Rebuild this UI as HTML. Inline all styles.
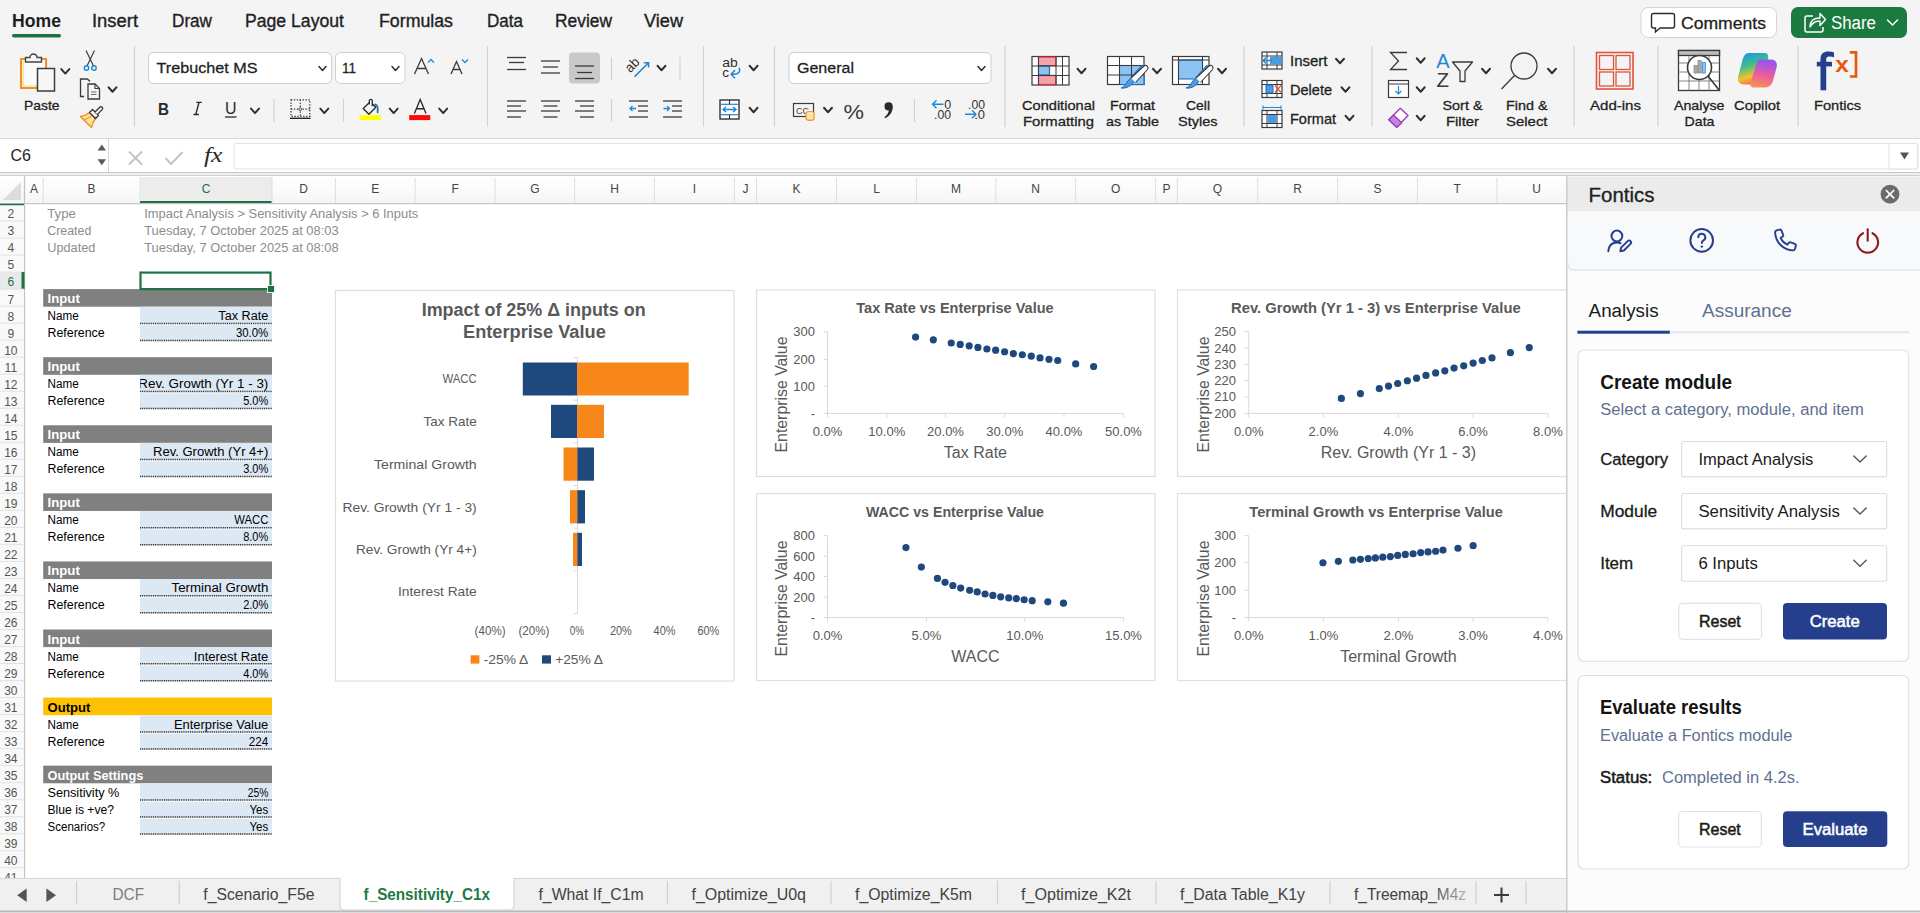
<!DOCTYPE html>
<html><head><meta charset="utf-8"><title>Excel - Fontics</title>
<style>
html,body{margin:0;padding:0;width:1920px;height:913px;overflow:hidden;background:#fff;}
svg{display:block;font-family:"Liberation Sans",sans-serif;}
</style></head><body>
<svg width="1920" height="913" viewBox="0 0 1920 913">
<rect x="0" y="0" width="1920" height="138" fill="#f4f4f4" stroke="none" stroke-width="1" rx="0" />
<line x1="0" y1="138.5" x2="1920" y2="138.5" stroke="#d6d6d6" stroke-width="1" />
<text x="12" y="26.5" font-size="17.5" fill="#1f1f1f" font-weight="bold" textLength="49" lengthAdjust="spacingAndGlyphs" stroke="#1f1f1f" stroke-width="0">Home</text>
<text x="92" y="26.5" font-size="17.5" fill="#1f1f1f" font-weight="normal" textLength="46" lengthAdjust="spacingAndGlyphs" stroke="#1f1f1f" stroke-width="0.35">Insert</text>
<text x="172" y="26.5" font-size="17.5" fill="#1f1f1f" font-weight="normal" textLength="40" lengthAdjust="spacingAndGlyphs" stroke="#1f1f1f" stroke-width="0.35">Draw</text>
<text x="245" y="26.5" font-size="17.5" fill="#1f1f1f" font-weight="normal" textLength="99" lengthAdjust="spacingAndGlyphs" stroke="#1f1f1f" stroke-width="0.35">Page Layout</text>
<text x="379" y="26.5" font-size="17.5" fill="#1f1f1f" font-weight="normal" textLength="74" lengthAdjust="spacingAndGlyphs" stroke="#1f1f1f" stroke-width="0.35">Formulas</text>
<text x="487" y="26.5" font-size="17.5" fill="#1f1f1f" font-weight="normal" textLength="36" lengthAdjust="spacingAndGlyphs" stroke="#1f1f1f" stroke-width="0.35">Data</text>
<text x="555" y="26.5" font-size="17.5" fill="#1f1f1f" font-weight="normal" textLength="57" lengthAdjust="spacingAndGlyphs" stroke="#1f1f1f" stroke-width="0.35">Review</text>
<text x="644" y="26.5" font-size="17.5" fill="#1f1f1f" font-weight="normal" textLength="39" lengthAdjust="spacingAndGlyphs" stroke="#1f1f1f" stroke-width="0.35">View</text>
<rect x="12" y="34" width="49" height="3.5" fill="#1a7340" stroke="none" stroke-width="1" rx="1.75" />
<rect x="1641" y="7.5" width="135.5" height="30" fill="#ffffff" stroke="#d4d4d4" stroke-width="1" rx="7" />
<path d="M1653.5,13.5 h19 a2,2 0 0 1 2,2 v10.5 a2,2 0 0 1 -2,2 h-12.5 l-4.5,4 v-4 h-2 a2,2 0 0 1 -2,-2 v-10.5 a2,2 0 0 1 2,-2 z" fill="none" stroke="#2b2b2b" stroke-width="1.4" />
<text x="1681" y="28.5" font-size="17" fill="#1f1f1f" stroke="#1f1f1f" stroke-width="0.3" textLength="85" lengthAdjust="spacingAndGlyphs">Comments</text>
<rect x="1791" y="7" width="116" height="31" fill="#1b7a40" stroke="none" stroke-width="1" rx="7" />
<path d="M1813,16 h-6 a2,2 0 0 0 -2,2 v12 a2,2 0 0 0 2,2 h14 a2,2 0 0 0 2,-2 v-3" fill="none" stroke="#fff" stroke-width="1.5" />
<path d="M1810,27 c0,-6 4,-9 10,-9 v-4.5 l5.5,6 l-5.5,6 v-4.5 c-4,0 -7.5,1.5 -10,6 z" fill="none" stroke="#fff" stroke-width="1.4" stroke-linejoin="round"/>
<text x="1831" y="29" font-size="18" fill="#ffffff" textLength="45" lengthAdjust="spacingAndGlyphs">Share</text>
<path d="M1887.5,20.0 L1892.5,25.0 L1897.5,20.0" fill="none" stroke="#fff" stroke-width="1.5" stroke-linecap="round" stroke-linejoin="round"/>
<line x1="134.5" y1="46" x2="134.5" y2="127" stroke="#d2d2d2" stroke-width="1.2" />
<line x1="487.5" y1="46" x2="487.5" y2="127" stroke="#d2d2d2" stroke-width="1.2" />
<line x1="703.5" y1="46" x2="703.5" y2="127" stroke="#d2d2d2" stroke-width="1.2" />
<line x1="774.5" y1="46" x2="774.5" y2="127" stroke="#d2d2d2" stroke-width="1.2" />
<line x1="1005" y1="46" x2="1005" y2="127" stroke="#d2d2d2" stroke-width="1.2" />
<line x1="1244" y1="46" x2="1244" y2="127" stroke="#d2d2d2" stroke-width="1.2" />
<line x1="1372" y1="46" x2="1372" y2="127" stroke="#d2d2d2" stroke-width="1.2" />
<line x1="1574" y1="46" x2="1574" y2="127" stroke="#d2d2d2" stroke-width="1.2" />
<line x1="1658" y1="46" x2="1658" y2="127" stroke="#d2d2d2" stroke-width="1.2" />
<line x1="1798" y1="46" x2="1798" y2="127" stroke="#d2d2d2" stroke-width="1.2" />
<line x1="274" y1="99" x2="274" y2="122" stroke="#d2d2d2" stroke-width="1.2" />
<line x1="343.5" y1="99" x2="343.5" y2="122" stroke="#d2d2d2" stroke-width="1.2" />
<line x1="611.5" y1="57" x2="611.5" y2="80" stroke="#d2d2d2" stroke-width="1.2" />
<line x1="680" y1="57" x2="680" y2="80" stroke="#d2d2d2" stroke-width="1.2" />
<line x1="611.5" y1="99" x2="611.5" y2="122" stroke="#d2d2d2" stroke-width="1.2" />
<line x1="914.5" y1="99" x2="914.5" y2="122" stroke="#d2d2d2" stroke-width="1.2" />
<path d="M21,59 h4 M42,59 h4 v9" fill="none" stroke="#f0902a" stroke-width="2.2" />
<rect x="21" y="59" width="25" height="29" fill="#fbfbfb" stroke="#f0902a" stroke-width="2" rx="0" />
<path d="M23.3,61 V86 H37" fill="none" stroke="#fde3a0" stroke-width="1.6" />
<rect x="37.5" y="68.5" width="17" height="22.5" fill="#f7f7f7" stroke="#3c3c3c" stroke-width="1.5" rx="0" />
<path d="M25.5,62 v-4.5 h4.5 a3.5,3.5 0 0 1 7,0 h4.5 v4.5 z" fill="#f4f4f4" stroke="#444" stroke-width="1.4" />
<path d="M61.3,69.05 L65.3,73.55 L69.3,69.05" fill="none" stroke="#2e2e2e" stroke-width="1.9" stroke-linecap="round" stroke-linejoin="round"/>
<text x="24" y="109.7" font-size="13" fill="#1f1f1f" stroke="#1f1f1f" stroke-width="0.3" textLength="35.5" lengthAdjust="spacingAndGlyphs">Paste</text>
<path d="M86,50.5 L93.5,66 M94.5,50.5 L87,66" fill="none" stroke="#333" stroke-width="1.1" />
<circle cx="86.5" cy="68" r="2.2" fill="none" stroke="#1e88d6" stroke-width="1.4"/>
<circle cx="94" cy="68" r="2.2" fill="none" stroke="#1e88d6" stroke-width="1.4"/>
<path d="M84,96.5 h-3.5 v-17.5 h7 l2.5,2.5" fill="none" stroke="#3a3a3a" stroke-width="1.3" />
<path d="M88,84 h7 l4.5,4.5 v10.5 h-11.5 z" fill="#f7f7f7" stroke="#3a3a3a" stroke-width="1.3" />
<path d="M95,84 v4.5 h4.5" fill="none" stroke="#3a3a3a" stroke-width="1.1" />
<line x1="91" y1="92" x2="96.5" y2="92" stroke="#555" stroke-width="0.9" />
<line x1="91" y1="94.5" x2="96.5" y2="94.5" stroke="#555" stroke-width="0.9" />
<path d="M108.5,87.25 L112.5,91.75 L116.5,87.25" fill="none" stroke="#2e2e2e" stroke-width="1.9" stroke-linecap="round" stroke-linejoin="round"/>
<path d="M80.5,116.5 C84,116 87,114.5 89.5,112.5 L95.5,118.5 C93.5,121 92,124 91.5,127.5 z" fill="#fde3a0" stroke="#f0902a" stroke-width="1.5" stroke-linejoin="round"/>
<path d="M84,120 L91,116.5" fill="none" stroke="#f0902a" stroke-width="1.1" />
<path d="M89.5,112.5 L92.5,109.5 L98.5,115.5 L95.5,118.5 z" fill="#f4f4f4" stroke="#333" stroke-width="1.3" stroke-linejoin="round"/>
<path d="M95,112 L99.8,107.2 A1.7,1.7 0 0 1 102.2,109.6 L97.4,114.4" fill="#f4f4f4" stroke="#333" stroke-width="1.3" />
<rect x="148.5" y="52.5" width="183" height="31" fill="#ffffff" stroke="#cfcfcf" stroke-width="1" rx="5" />
<text x="156.5" y="73.2" font-size="15.5" fill="#1f1f1f" stroke="#1f1f1f" stroke-width="0.3" textLength="101" lengthAdjust="spacingAndGlyphs">Trebuchet MS</text>
<path d="M319.0,66.5 L322.5,70.5 L326.0,66.5" fill="none" stroke="#2e2e2e" stroke-width="1.5" stroke-linecap="round" stroke-linejoin="round"/>
<rect x="335.5" y="52.5" width="69.5" height="31" fill="#ffffff" stroke="#cfcfcf" stroke-width="1" rx="5" />
<text x="342" y="73.2" font-size="15.5" fill="#1f1f1f" stroke="#1f1f1f" stroke-width="0.3" textLength="14" lengthAdjust="spacingAndGlyphs">11</text>
<path d="M392.0,66.5 L395.5,70.5 L399.0,66.5" fill="none" stroke="#2e2e2e" stroke-width="1.5" stroke-linecap="round" stroke-linejoin="round"/>
<path d="M414.5,74 L421.5,58.5 L428.5,74 M417,68.5 h9" fill="none" stroke="#3a3a3a" stroke-width="1.3" />
<path d="M428,62.5 l3,-3 l3,3" fill="none" stroke="#1e88d6" stroke-width="1.3" />
<path d="M451,74 L456.5,61.5 L462,74 M453,69.5 h7" fill="none" stroke="#3a3a3a" stroke-width="1.3" />
<path d="M462,59.5 l3,3 l3,-3" fill="none" stroke="#1e88d6" stroke-width="1.3" />
<text x="158" y="114.5" font-size="17" fill="#2a2a2a" font-weight="bold" textLength="11" lengthAdjust="spacingAndGlyphs">B</text>
<path d="M196.3,102.3 H201.8 M199.05,102.3 L195.75,114.5 M193.4,114.5 H198.9" fill="none" stroke="#2a2a2a" stroke-width="1.35" />
<text x="225" y="114" font-size="16" fill="#2a2a2a" textLength="11.5" lengthAdjust="spacingAndGlyphs">U</text>
<line x1="225" y1="117" x2="236.5" y2="117" stroke="#2a2a2a" stroke-width="1.3" />
<path d="M251.0,108.55 L255,113.05 L259.0,108.55" fill="none" stroke="#2e2e2e" stroke-width="1.9" stroke-linecap="round" stroke-linejoin="round"/>
<rect x="291" y="99.8" width="18.8" height="16.5" fill="none" stroke="#333" stroke-width="1.3" stroke-dasharray="1.3,1.6"/>
<path d="M300.3,99.8 v16.5 M291,109.2 h18.8" fill="none" stroke="#333" stroke-width="1.2" stroke-dasharray="1.3,1.6"/>
<circle cx="300.3" cy="109.2" r="1.4" fill="#f4f4f4" stroke="#333" stroke-width="0.9"/>
<line x1="290" y1="118.3" x2="310.5" y2="118.3" stroke="#222" stroke-width="1.4" />
<path d="M320.3,108.55 L324.3,113.05 L328.3,108.55" fill="none" stroke="#2e2e2e" stroke-width="1.9" stroke-linecap="round" stroke-linejoin="round"/>
<path d="M369.2,102.8 L363.2,108.6 L368.9,114.2 L375.8,107.2 L372.4,103.9" fill="none" stroke="#2a2a2a" stroke-width="1.35" stroke-linejoin="round"/>
<path d="M369.3,104.5 V100.9 A1.5,1.5 0 0 1 372.3,100.9 V106.2" fill="none" stroke="#2a2a2a" stroke-width="1.3" />
<path d="M375.2,104.4 C377.2,104.9 378.2,107.5 377.6,112.4" fill="none" stroke="#1e6fc0" stroke-width="1.8" stroke-linecap="round"/>
<rect x="359.6" y="115.1" width="21.2" height="5" fill="#ffff00" stroke="none" stroke-width="1" rx="0" />
<path d="M389.7,108.55 L393.7,113.05 L397.7,108.55" fill="none" stroke="#2e2e2e" stroke-width="1.9" stroke-linecap="round" stroke-linejoin="round"/>
<path d="M414.4,113.6 L420.2,99.6 L426,113.6 M416.5,108.7 h7.5" fill="none" stroke="#2a2a2a" stroke-width="1.35" />
<rect x="409.2" y="115.1" width="21" height="5" fill="#ff0a0a" stroke="none" stroke-width="1" rx="0" />
<path d="M439.2,108.55 L443.2,113.05 L447.2,108.55" fill="none" stroke="#2e2e2e" stroke-width="1.9" stroke-linecap="round" stroke-linejoin="round"/>
<rect x="569" y="52.5" width="31" height="31" fill="#c9c9c9" stroke="none" stroke-width="1" rx="4" />
<line x1="507" y1="57.5" x2="526" y2="57.5" stroke="#3a3a3a" stroke-width="1.3" />
<line x1="509" y1="62.5" x2="524" y2="62.5" stroke="#3a3a3a" stroke-width="1.3" />
<line x1="507" y1="69.5" x2="526" y2="69.5" stroke="#3a3a3a" stroke-width="1.3" />
<line x1="541" y1="61" x2="560" y2="61" stroke="#3a3a3a" stroke-width="1.3" />
<line x1="543" y1="67" x2="558" y2="67" stroke="#3a3a3a" stroke-width="1.3" />
<line x1="541" y1="73" x2="560" y2="73" stroke="#3a3a3a" stroke-width="1.3" />
<line x1="575" y1="66" x2="594" y2="66" stroke="#3a3a3a" stroke-width="1.3" />
<line x1="577" y1="72.5" x2="592" y2="72.5" stroke="#3a3a3a" stroke-width="1.3" />
<line x1="575" y1="78.5" x2="594" y2="78.5" stroke="#3a3a3a" stroke-width="1.3" />
<line x1="507" y1="101" x2="526" y2="101" stroke="#3a3a3a" stroke-width="1.3" />
<line x1="507" y1="106" x2="521" y2="106" stroke="#3a3a3a" stroke-width="1.3" />
<line x1="507" y1="111" x2="526" y2="111" stroke="#3a3a3a" stroke-width="1.3" />
<line x1="507" y1="117" x2="521" y2="117" stroke="#3a3a3a" stroke-width="1.3" />
<line x1="541.0" y1="101" x2="560.0" y2="101" stroke="#3a3a3a" stroke-width="1.3" />
<line x1="543.5" y1="106" x2="557.5" y2="106" stroke="#3a3a3a" stroke-width="1.3" />
<line x1="541.0" y1="111" x2="560.0" y2="111" stroke="#3a3a3a" stroke-width="1.3" />
<line x1="543.5" y1="117" x2="557.5" y2="117" stroke="#3a3a3a" stroke-width="1.3" />
<line x1="575" y1="101" x2="594" y2="101" stroke="#3a3a3a" stroke-width="1.3" />
<line x1="580" y1="106" x2="594" y2="106" stroke="#3a3a3a" stroke-width="1.3" />
<line x1="575" y1="111" x2="594" y2="111" stroke="#3a3a3a" stroke-width="1.3" />
<line x1="580" y1="117" x2="594" y2="117" stroke="#3a3a3a" stroke-width="1.3" />
<text x="0" y="0" font-size="13.5" fill="#2e2e2e" transform="translate(630.2,73.2) rotate(-45)" textLength="14.5" lengthAdjust="spacingAndGlyphs">ab</text>
<path d="M634.6,76.6 L648.6,62.8 M643.8,62.8 h4.8 v4.8" fill="none" stroke="#1e88d6" stroke-width="1.5" />
<path d="M657.5,65.75 L661.5,70.25 L665.5,65.75" fill="none" stroke="#2e2e2e" stroke-width="1.9" stroke-linecap="round" stroke-linejoin="round"/>
<line x1="629" y1="101" x2="648" y2="101" stroke="#3a3a3a" stroke-width="1.3" />
<line x1="638" y1="106" x2="648" y2="106" stroke="#3a3a3a" stroke-width="1.3" />
<line x1="638" y1="111" x2="648" y2="111" stroke="#3a3a3a" stroke-width="1.3" />
<line x1="629" y1="117" x2="648" y2="117" stroke="#3a3a3a" stroke-width="1.3" />
<path d="M636,108.5 h-6 m2.5,-2.5 l-2.5,2.5 l2.5,2.5" fill="none" stroke="#1e88d6" stroke-width="1.3" />
<line x1="663" y1="101" x2="682" y2="101" stroke="#3a3a3a" stroke-width="1.3" />
<line x1="672" y1="106" x2="682" y2="106" stroke="#3a3a3a" stroke-width="1.3" />
<line x1="672" y1="111" x2="682" y2="111" stroke="#3a3a3a" stroke-width="1.3" />
<line x1="663" y1="117" x2="682" y2="117" stroke="#3a3a3a" stroke-width="1.3" />
<path d="M663.5,108.5 h6 m-2.5,-2.5 l2.5,2.5 l-2.5,2.5" fill="none" stroke="#1e88d6" stroke-width="1.3" />
<text x="722.3" y="67.2" font-size="13.5" fill="#2e2e2e" textLength="15.5" lengthAdjust="spacingAndGlyphs">ab</text>
<text x="722.3" y="77.2" font-size="13.5" fill="#2e2e2e">c</text>
<path d="M739.3,68.3 C740.8,72.5 737.5,74.8 731.3,74.3 M734.6,70.6 L731,74.2 L734.6,77.8" fill="none" stroke="#1e88d6" stroke-width="1.5" stroke-linecap="round" stroke-linejoin="round"/>
<path d="M749.6,65.75 L753.6,70.25 L757.6,65.75" fill="none" stroke="#2e2e2e" stroke-width="1.9" stroke-linecap="round" stroke-linejoin="round"/>
<rect x="720" y="100" width="19" height="19" fill="#ffffff" stroke="#333" stroke-width="1.4" rx="0" />
<line x1="720.7" y1="104.3" x2="738.3" y2="104.3" stroke="#1e88d6" stroke-width="1.2" />
<line x1="720.7" y1="114.7" x2="738.3" y2="114.7" stroke="#1e88d6" stroke-width="1.2" />
<line x1="729.5" y1="100" x2="729.5" y2="104.3" stroke="#333" stroke-width="1.1" />
<line x1="729.5" y1="114.7" x2="729.5" y2="119" stroke="#333" stroke-width="1.1" />
<path d="M723,109.5 h13 m-10,-2.5 l-3,2.5 l3,2.5 m7,-5 l3,2.5 l-3,2.5" fill="none" stroke="#1e88d6" stroke-width="1.4" />
<path d="M749.6,107.75 L753.6,112.25 L757.6,107.75" fill="none" stroke="#2e2e2e" stroke-width="1.9" stroke-linecap="round" stroke-linejoin="round"/>
<rect x="789" y="52.5" width="202" height="31" fill="#ffffff" stroke="#cfcfcf" stroke-width="1" rx="5" />
<text x="797" y="73.2" font-size="15.5" fill="#1f1f1f" stroke="#1f1f1f" stroke-width="0.3" textLength="57" lengthAdjust="spacingAndGlyphs">General</text>
<path d="M978.0,66.5 L981.5,70.5 L985.0,66.5" fill="none" stroke="#2e2e2e" stroke-width="1.5" stroke-linecap="round" stroke-linejoin="round"/>
<rect x="793.5" y="103.5" width="20" height="13" fill="none" stroke="#3a3a3a" stroke-width="1.2" rx="0" />
<text x="796" y="114" font-size="9" fill="#3a3a3a">CC</text>
<ellipse cx="810" cy="113.5" rx="4" ry="1.8" fill="#fff" stroke="#f0902a" stroke-width="1.2"/>
<path d="M806,113.5 v5 a4,1.8 0 0 0 8,0 v-5" fill="#fde0a8" stroke="#f0902a" stroke-width="1.2" />
<path d="M824.0,107.75 L828,112.25 L832.0,107.75" fill="none" stroke="#2e2e2e" stroke-width="1.9" stroke-linecap="round" stroke-linejoin="round"/>
<text x="843.5" y="118.8" font-size="20" fill="#3a3a3a" textLength="20.5" lengthAdjust="spacingAndGlyphs">%</text>
<circle cx="888.6" cy="106.4" r="4.1" fill="#2a2a2a"/>
<path d="M892.6,106.8 C893,111.5 890,116 885.2,118.3 L884.4,117.2 C887.2,115.2 888.8,112.5 888.9,109.5 z" fill="#2a2a2a" stroke="none" stroke-width="1" />
<text x="944.2" y="108.6" font-size="12.5" fill="#333">0</text>
<text x="934" y="118.8" font-size="12.5" fill="#333" textLength="17" lengthAdjust="spacingAndGlyphs">.00</text>
<path d="M943.5,104.2 h-11 m4,-4 l-4,4 l4,4" fill="none" stroke="#1e88d6" stroke-width="1.4" stroke-linejoin="round"/>
<text x="968" y="108.6" font-size="12.5" fill="#333" textLength="17" lengthAdjust="spacingAndGlyphs">.00</text>
<text x="974.2" y="118.8" font-size="12.5" fill="#333" textLength="10.8" lengthAdjust="spacingAndGlyphs">.0</text>
<path d="M965,114.3 h11 m-4,-4 l4,4 l-4,4" fill="none" stroke="#1e88d6" stroke-width="1.4" stroke-linejoin="round"/>
<rect x="1032" y="56.5" width="37" height="28.5" fill="#fff" stroke="#3a3a3a" stroke-width="1.2" rx="0" />
<rect x="1038.5" y="57.1" width="17.5" height="8.5" fill="#f7a1a8" stroke="#d93342" stroke-width="1.2" rx="0" />
<rect x="1038.5" y="66.0" width="11" height="9" fill="#8cc3f0" stroke="#1e6fc0" stroke-width="1.2" rx="0" />
<rect x="1038.5" y="75.5" width="17.5" height="9" fill="#f7a1a8" stroke="#d93342" stroke-width="1.2" rx="0" />
<line x1="1038.5" y1="56.5" x2="1038.5" y2="85.0" stroke="#3a3a3a" stroke-width="1" />
<line x1="1056" y1="56.5" x2="1056" y2="85.0" stroke="#3a3a3a" stroke-width="1" />
<line x1="1062.5" y1="56.5" x2="1062.5" y2="85.0" stroke="#3a3a3a" stroke-width="1" />
<line x1="1032" y1="66.0" x2="1069" y2="66.0" stroke="#3a3a3a" stroke-width="1" />
<line x1="1032" y1="75.5" x2="1069" y2="75.5" stroke="#3a3a3a" stroke-width="1" />
<path d="M1077.5,68.75 L1081.5,73.25 L1085.5,68.75" fill="none" stroke="#2e2e2e" stroke-width="1.9" stroke-linecap="round" stroke-linejoin="round"/>
<text x="1022" y="110" font-size="13.5" fill="#1f1f1f" stroke="#1f1f1f" stroke-width="0.3" textLength="73" lengthAdjust="spacingAndGlyphs">Conditional</text>
<text x="1023" y="125.5" font-size="13.5" fill="#1f1f1f" stroke="#1f1f1f" stroke-width="0.3" textLength="71" lengthAdjust="spacingAndGlyphs">Formatting</text>
<rect x="1107.5" y="56.5" width="36.5" height="28" fill="#fff" stroke="#3a3a3a" stroke-width="1.2" rx="0" />
<rect x="1119.5" y="65.5" width="24.5" height="19" fill="#8cc3f0" stroke="#1e6fc0" stroke-width="1.1" rx="0" />
<line x1="1119.5" y1="56.5" x2="1119.5" y2="84.5" stroke="#3a3a3a" stroke-width="1" />
<line x1="1131.5" y1="56.5" x2="1131.5" y2="84.5" stroke="#3a3a3a" stroke-width="1" />
<line x1="1107.5" y1="65.5" x2="1144.0" y2="65.5" stroke="#3a3a3a" stroke-width="1" />
<line x1="1107.5" y1="75.0" x2="1144.0" y2="75.0" stroke="#3a3a3a" stroke-width="1" />
<path d="M1121,88 c3,-1 5,-3 6,-6 l14,-16 a2.5,2.5 0 0 1 3.5,3.5 l-14,16 c-3,2 -6,3 -9.5,2.5 z" fill="#4a9be0" stroke="#1e6fc0" stroke-width="1" />
<path d="M1131,78 l13,-12 a2.5,2.5 0 0 1 3.5,3.5 l-12,13" fill="#fff" stroke="#3a3a3a" stroke-width="1.1" />
<path d="M1153.0,68.75 L1157,73.25 L1161.0,68.75" fill="none" stroke="#2e2e2e" stroke-width="1.9" stroke-linecap="round" stroke-linejoin="round"/>
<text x="1110" y="110" font-size="13.5" fill="#1f1f1f" stroke="#1f1f1f" stroke-width="0.3" textLength="45" lengthAdjust="spacingAndGlyphs">Format</text>
<text x="1106" y="125.5" font-size="13.5" fill="#1f1f1f" stroke="#1f1f1f" stroke-width="0.3" textLength="53" lengthAdjust="spacingAndGlyphs">as Table</text>
<rect x="1172.5" y="56.5" width="36.5" height="28" fill="#fff" stroke="#3a3a3a" stroke-width="1.2" rx="0" />
<rect x="1178.5" y="60" width="24" height="19" fill="#8cc3f0" stroke="#1e6fc0" stroke-width="1.1" rx="0" />
<line x1="1172.5" y1="60" x2="1209.0" y2="60" stroke="#3a3a3a" stroke-width="1" />
<line x1="1178.5" y1="56.5" x2="1178.5" y2="84.5" stroke="#3a3a3a" stroke-width="1" />
<line x1="1202.5" y1="56.5" x2="1202.5" y2="84.5" stroke="#3a3a3a" stroke-width="1" />
<path d="M1186,88 c3,-1 5,-3 6,-6 l14,-16 a2.5,2.5 0 0 1 3.5,3.5 l-14,16 c-3,2 -6,3 -9.5,2.5 z" fill="#4a9be0" stroke="#1e6fc0" stroke-width="1" />
<path d="M1196,78 l13,-12 a2.5,2.5 0 0 1 3.5,3.5 l-12,13" fill="#fff" stroke="#3a3a3a" stroke-width="1.1" />
<path d="M1218.0,68.75 L1222,73.25 L1226.0,68.75" fill="none" stroke="#2e2e2e" stroke-width="1.9" stroke-linecap="round" stroke-linejoin="round"/>
<text x="1186" y="110" font-size="13.5" fill="#1f1f1f" stroke="#1f1f1f" stroke-width="0.3" textLength="24" lengthAdjust="spacingAndGlyphs">Cell</text>
<text x="1178" y="125.5" font-size="13.5" fill="#1f1f1f" stroke="#1f1f1f" stroke-width="0.3" textLength="39.5" lengthAdjust="spacingAndGlyphs">Styles</text>
<rect x="1262" y="52" width="20" height="17" fill="#fff" stroke="#3a3a3a" stroke-width="1.2" rx="0" />
<line x1="1262" y1="56" x2="1282" y2="56" stroke="#3a3a3a" stroke-width="1" />
<line x1="1262" y1="65" x2="1282" y2="65" stroke="#3a3a3a" stroke-width="1" />
<line x1="1267" y1="52" x2="1267" y2="69" stroke="#3a3a3a" stroke-width="1" />
<line x1="1277" y1="52" x2="1277" y2="69" stroke="#3a3a3a" stroke-width="1" />
<rect x="1270" y="56.5" width="11.5" height="8" fill="#4a9be0" stroke="none" stroke-width="1" rx="0" />
<path d="M1272,60.5 h-9 m3,-3 l-3,3 l3,3" fill="none" stroke="#1e88d6" stroke-width="1.3" />
<rect x="1262" y="80.5" width="20" height="17" fill="#fff" stroke="#3a3a3a" stroke-width="1.2" rx="0" />
<line x1="1262" y1="84.5" x2="1282" y2="84.5" stroke="#3a3a3a" stroke-width="1" />
<line x1="1262" y1="93.5" x2="1282" y2="93.5" stroke="#3a3a3a" stroke-width="1" />
<line x1="1267" y1="80.5" x2="1267" y2="97.5" stroke="#3a3a3a" stroke-width="1" />
<line x1="1277" y1="80.5" x2="1277" y2="97.5" stroke="#3a3a3a" stroke-width="1" />
<rect x="1266" y="85.0" width="7" height="8" fill="#4a9be0" stroke="#1e6fc0" stroke-width="1" rx="0" />
<path d="M1275,85.5 l6,7 m0,-7 l-6,7" fill="none" stroke="#e0553a" stroke-width="1.3" />
<rect x="1262" y="110.5" width="20" height="17" fill="#fff" stroke="#3a3a3a" stroke-width="1.2" rx="0" />
<line x1="1262" y1="114.5" x2="1282" y2="114.5" stroke="#3a3a3a" stroke-width="1" />
<line x1="1262" y1="123.5" x2="1282" y2="123.5" stroke="#3a3a3a" stroke-width="1" />
<line x1="1267" y1="110.5" x2="1267" y2="127.5" stroke="#3a3a3a" stroke-width="1" />
<line x1="1277" y1="110.5" x2="1277" y2="127.5" stroke="#3a3a3a" stroke-width="1" />
<rect x="1267.5" y="115.0" width="9" height="8" fill="#4a9be0" stroke="none" stroke-width="1" rx="0" />
<path d="M1263,107.5 h18 M1263,105.5 v4 M1281,105.5 v4" fill="none" stroke="#1e88d6" stroke-width="1.1" />
<text x="1290" y="66" font-size="14.5" fill="#1f1f1f" stroke="#1f1f1f" stroke-width="0.3" textLength="37.5" lengthAdjust="spacingAndGlyphs">Insert</text>
<path d="M1336.0,58.75 L1340,63.25 L1344.0,58.75" fill="none" stroke="#2e2e2e" stroke-width="1.9" stroke-linecap="round" stroke-linejoin="round"/>
<text x="1290" y="95" font-size="14.5" fill="#1f1f1f" stroke="#1f1f1f" stroke-width="0.3" textLength="42" lengthAdjust="spacingAndGlyphs">Delete</text>
<path d="M1341.5,87.25 L1345.5,91.75 L1349.5,87.25" fill="none" stroke="#2e2e2e" stroke-width="1.9" stroke-linecap="round" stroke-linejoin="round"/>
<text x="1290" y="123.5" font-size="14.5" fill="#1f1f1f" stroke="#1f1f1f" stroke-width="0.3" textLength="46" lengthAdjust="spacingAndGlyphs">Format</text>
<path d="M1345.5,115.75 L1349.5,120.25 L1353.5,115.75" fill="none" stroke="#2e2e2e" stroke-width="1.9" stroke-linecap="round" stroke-linejoin="round"/>
<path d="M1407,52.5 h-16.5 l8,8.5 l-8,8.5 h16.5" fill="none" stroke="#3a3a3a" stroke-width="1.3" />
<path d="M1416.7,58.25 L1420.7,62.75 L1424.7,58.25" fill="none" stroke="#2e2e2e" stroke-width="1.9" stroke-linecap="round" stroke-linejoin="round"/>
<rect x="1388.5" y="80.5" width="20" height="17" fill="#fff" stroke="#3a3a3a" stroke-width="1.2" rx="0" />
<line x1="1388.5" y1="84" x2="1408.5" y2="84" stroke="#3a3a3a" stroke-width="1" />
<path d="M1398.5,86 v8 m-3,-3 l3,3 l3,-3" fill="none" stroke="#1e88d6" stroke-width="1.2" />
<path d="M1416.7,87.25 L1420.7,91.75 L1424.7,87.25" fill="none" stroke="#2e2e2e" stroke-width="1.9" stroke-linecap="round" stroke-linejoin="round"/>
<path d="M1388.8,119.8 L1400.3,108.3 L1408,115.4 L1396.7,127.3 z" fill="#fff" stroke="#9b3fc0" stroke-width="1.4" stroke-linejoin="round"/>
<path d="M1388.8,119.8 L1393.6,115 L1401.8,122.8 L1396.7,127.3 z" fill="#c585de" stroke="#9b3fc0" stroke-width="1.3" stroke-linejoin="round"/>
<path d="M1416.7,115.75 L1420.7,120.25 L1424.7,115.75" fill="none" stroke="#2e2e2e" stroke-width="1.9" stroke-linecap="round" stroke-linejoin="round"/>
<text x="1436.3" y="68.4" font-size="20" fill="#1e88d6" textLength="13.4" lengthAdjust="spacingAndGlyphs">A</text>
<text x="1436.5" y="87" font-size="20" fill="#3a3a3a" textLength="12.5" lengthAdjust="spacingAndGlyphs">Z</text>
<path d="M1452.5,62 h20 l-7.5,9 v10.5 h-5 v-10.5 z" fill="none" stroke="#3a3a3a" stroke-width="1.3" stroke-linejoin="round"/>
<path d="M1482.0,68.75 L1486,73.25 L1490.0,68.75" fill="none" stroke="#2e2e2e" stroke-width="1.9" stroke-linecap="round" stroke-linejoin="round"/>
<text x="1442.5" y="110" font-size="13.5" fill="#1f1f1f" stroke="#1f1f1f" stroke-width="0.3" textLength="40" lengthAdjust="spacingAndGlyphs">Sort &amp;</text>
<text x="1446" y="125.5" font-size="13.5" fill="#1f1f1f" stroke="#1f1f1f" stroke-width="0.3" textLength="33" lengthAdjust="spacingAndGlyphs">Filter</text>
<circle cx="1524" cy="66" r="13" fill="none" stroke="#3a3a3a" stroke-width="1.3"/>
<line x1="1514.5" y1="75.5" x2="1501.5" y2="89" stroke="#3a3a3a" stroke-width="1.3" />
<path d="M1548.0,68.75 L1552,73.25 L1556.0,68.75" fill="none" stroke="#2e2e2e" stroke-width="1.9" stroke-linecap="round" stroke-linejoin="round"/>
<text x="1506" y="110" font-size="13.5" fill="#1f1f1f" stroke="#1f1f1f" stroke-width="0.3" textLength="41.5" lengthAdjust="spacingAndGlyphs">Find &amp;</text>
<text x="1506" y="125.5" font-size="13.5" fill="#1f1f1f" stroke="#1f1f1f" stroke-width="0.3" textLength="41.5" lengthAdjust="spacingAndGlyphs">Select</text>
<rect x="1596.5" y="52.5" width="36.5" height="36.5" fill="none" stroke="#e0553a" stroke-width="1.6" rx="0" />
<rect x="1599.5" y="55.5" width="14" height="14" fill="none" stroke="#e0553a" stroke-width="1.3" rx="0" />
<rect x="1616" y="55.5" width="14" height="14" fill="none" stroke="#e0553a" stroke-width="1.3" rx="0" />
<rect x="1599.5" y="72" width="14" height="14" fill="none" stroke="#e0553a" stroke-width="1.3" rx="0" />
<rect x="1616" y="72" width="14" height="14" fill="none" stroke="#e0553a" stroke-width="1.3" rx="0" />
<text x="1590" y="110" font-size="13.5" fill="#1f1f1f" stroke="#1f1f1f" stroke-width="0.3" textLength="51" lengthAdjust="spacingAndGlyphs">Add-ins</text>
<rect x="1678.5" y="50.5" width="41" height="40" fill="#fff" stroke="#3a3a3a" stroke-width="1.3" rx="0" />
<rect x="1678.5" y="50.5" width="41" height="5" fill="#bdbdbd" stroke="#3a3a3a" stroke-width="1.3" rx="0" />
<line x1="1678.5" y1="63" x2="1719.5" y2="63" stroke="#777" stroke-width="0.9" />
<line x1="1678.5" y1="72" x2="1719.5" y2="72" stroke="#777" stroke-width="0.9" />
<line x1="1678.5" y1="81" x2="1719.5" y2="81" stroke="#777" stroke-width="0.9" />
<line x1="1689" y1="55.5" x2="1689" y2="90.5" stroke="#777" stroke-width="0.9" />
<line x1="1699" y1="55.5" x2="1699" y2="90.5" stroke="#777" stroke-width="0.9" />
<line x1="1709" y1="55.5" x2="1709" y2="90.5" stroke="#777" stroke-width="0.9" />
<circle cx="1699.5" cy="67.5" r="12" fill="#fff" stroke="#3a3a3a" stroke-width="1.6"/>
<rect x="1694" y="65.5" width="3.2" height="7.5" fill="#aaa" stroke="#777" stroke-width="0.6" rx="0" />
<rect x="1698" y="60.5" width="3.2" height="12.5" fill="#aaa" stroke="#777" stroke-width="0.6" rx="0" />
<rect x="1702.2" y="62.5" width="3.2" height="10.5" fill="#8cc3f0" stroke="#1e6fc0" stroke-width="0.6" rx="0" />
<line x1="1708" y1="76" x2="1719" y2="90" stroke="#3a3a3a" stroke-width="1.6" />
<text x="1674" y="110" font-size="13.5" fill="#1f1f1f" stroke="#1f1f1f" stroke-width="0.3" textLength="50.5" lengthAdjust="spacingAndGlyphs">Analyse</text>
<text x="1684.5" y="125.5" font-size="13.5" fill="#1f1f1f" stroke="#1f1f1f" stroke-width="0.3" textLength="30" lengthAdjust="spacingAndGlyphs">Data</text>
<defs>
<linearGradient id="cpA" x1="0" y1="0" x2="1" y2="1"><stop offset="0" stop-color="#2aa6f2"/><stop offset="0.5" stop-color="#3fc5a0"/><stop offset="1" stop-color="#f6c433"/></linearGradient>
<linearGradient id="cpB" x1="0" y1="0" x2="1" y2="1"><stop offset="0" stop-color="#b35ee8"/><stop offset="0.6" stop-color="#f0609a"/><stop offset="1" stop-color="#f88a3c"/></linearGradient>
</defs>
<defs>
<linearGradient id="cpC" x1="0" y1="0" x2="0.3" y2="1"><stop offset="0" stop-color="#1b8ef2"/><stop offset="0.45" stop-color="#3bbf8a"/><stop offset="0.8" stop-color="#f2c230"/><stop offset="1" stop-color="#f07a3a"/></linearGradient>
<linearGradient id="cpD" x1="0.2" y1="0" x2="0" y2="1"><stop offset="0" stop-color="#9b55ea"/><stop offset="0.5" stop-color="#ec5f9a"/><stop offset="1" stop-color="#f79a48"/></linearGradient>
</defs>
<path d="M1748.5,53 H1764 C1767.5,53 1769,55 1768,58.5 L1762,79 C1761,82.5 1759,84.5 1755.5,84.5 H1744.5 C1739.5,84.5 1737,81 1738.2,76.5 L1742.5,60 C1743.5,56 1745.5,53 1748.5,53 z" fill="url(#cpC)" stroke="none" stroke-width="1" />
<path d="M1760.5,59.5 H1771 C1775.5,59.5 1777.8,63 1776.6,67.5 L1773,80.5 C1772,84.5 1769.5,87.5 1765,87.5 H1754.5 C1751,87.5 1749.5,85.5 1750.5,82.5 L1756.5,63.5 C1757.3,61 1758.5,59.5 1760.5,59.5 z" fill="url(#cpD)" stroke="none" stroke-width="1" />
<text x="1734" y="110" font-size="13.5" fill="#1f1f1f" stroke="#1f1f1f" stroke-width="0.3" textLength="46" lengthAdjust="spacingAndGlyphs">Copilot</text>
<path d="M1820.5,62 V59 C1820.5,53.8 1823.5,51.5 1828.3,51.5 C1830.3,51.5 1832.5,51.9 1834,52.4 V57.2 C1832.6,56.7 1830.8,56.4 1829.4,56.4 C1827.2,56.4 1826.2,57.5 1826.2,59.7 V62 z" fill="#253f8f" stroke="none" stroke-width="1" />
<rect x="1820.5" y="61.5" width="5.7" height="28.8" fill="#253f8f" stroke="none" stroke-width="1" rx="0" />
<rect x="1816.8" y="61.8" width="15.2" height="4.6" fill="#253f8f" stroke="none" stroke-width="1" rx="0" />
<text x="1835.3" y="72.3" font-size="22" fill="#e8590c" font-weight="bold" textLength="13.6" lengthAdjust="spacingAndGlyphs">x</text>
<path d="M1849.8,52.3 H1856 V76.5 H1849.8" fill="none" stroke="#e8590c" stroke-width="2.7" />
<text x="1814" y="110" font-size="13.5" fill="#1f1f1f" stroke="#1f1f1f" stroke-width="0.3" textLength="47" lengthAdjust="spacingAndGlyphs">Fontics</text>
<rect x="0" y="139" width="1920" height="33.5" fill="#ffffff" stroke="none" stroke-width="1" rx="0" />
<line x1="108.5" y1="139" x2="108.5" y2="172.5" stroke="#d4d4d4" stroke-width="1" />
<text x="10.5" y="160.6" font-size="16" fill="#1f1f1f" textLength="20.5" lengthAdjust="spacingAndGlyphs">C6</text>
<path d="M97.5,150.5 L101.8,144.5 L106,150.5 z" fill="#5a5a5a" stroke="none" stroke-width="1" />
<path d="M97.5,159.3 L101.8,165.3 L106,159.3 z" fill="#5a5a5a" stroke="none" stroke-width="1" />
<path d="M129,151.5 L142,164.5 M142,151.5 L129,164.5" fill="none" stroke="#c4c4c4" stroke-width="2" />
<path d="M165.5,158 L171,164 L182.5,152" fill="none" stroke="#c4c4c4" stroke-width="2" stroke-linejoin="round"/>
<text x="204" y="162.3" font-size="21" fill="#2a2a2a" font-style="italic" font-family="Liberation Serif" textLength="18.5" lengthAdjust="spacingAndGlyphs">fx</text>
<rect x="234" y="143.5" width="1684" height="25.5" fill="#ffffff" stroke="#e2e2e2" stroke-width="1" rx="2" />
<rect x="1889" y="143.5" width="28.5" height="25.5" fill="#ffffff" stroke="#e2e2e2" stroke-width="1" rx="2" />
<path d="M1900,152.5 L1904.5,159.5 L1909,152.5 z" fill="#555" stroke="none" stroke-width="1" />
<line x1="0" y1="172.5" x2="1920" y2="172.5" stroke="#c9c9c9" stroke-width="1.2" />
<rect x="0" y="173" width="1920" height="2.5" fill="#f0f0f0" stroke="none" stroke-width="1" rx="0" />
<line x1="0" y1="175.6" x2="1920" y2="175.6" stroke="#c9c9c9" stroke-width="1" />
<defs><linearGradient id="hdr" x1="0" y1="0" x2="0" y2="1"><stop offset="0" stop-color="#ffffff"/><stop offset="1" stop-color="#f6f6f6"/></linearGradient></defs>
<rect x="0" y="176" width="1566" height="27.5" fill="url(#hdr)" stroke="none" stroke-width="1" rx="0" />
<path d="M3,200 L21,182 L21,200 z" fill="#dcdcdc" stroke="none" stroke-width="1" />
<line x1="24.5" y1="176" x2="24.5" y2="878" stroke="#c3c3c3" stroke-width="1.3" />
<line x1="43.2" y1="178" x2="43.2" y2="203" stroke="#dedede" stroke-width="1" />
<text x="33.9" y="193.4" font-size="12" fill="#444" text-anchor="middle">A</text>
<line x1="140" y1="178" x2="140" y2="203" stroke="#dedede" stroke-width="1" />
<text x="91.6" y="193.4" font-size="12" fill="#444" text-anchor="middle">B</text>
<rect x="140" y="177" width="132" height="26.5" fill="#ececec" stroke="none" stroke-width="1" rx="0" />
<rect x="140" y="201" width="132" height="3" fill="#1e7145" stroke="none" stroke-width="1" rx="0" />
<line x1="272" y1="178" x2="272" y2="203" stroke="#dedede" stroke-width="1" />
<text x="206.0" y="193.4" font-size="12" fill="#1e7145" text-anchor="middle">C</text>
<line x1="335.4" y1="178" x2="335.4" y2="203" stroke="#dedede" stroke-width="1" />
<text x="303.7" y="193.4" font-size="12" fill="#444" text-anchor="middle">D</text>
<line x1="415.2" y1="178" x2="415.2" y2="203" stroke="#dedede" stroke-width="1" />
<text x="375.3" y="193.4" font-size="12" fill="#444" text-anchor="middle">E</text>
<line x1="495" y1="178" x2="495" y2="203" stroke="#dedede" stroke-width="1" />
<text x="455.1" y="193.4" font-size="12" fill="#444" text-anchor="middle">F</text>
<line x1="574.6" y1="178" x2="574.6" y2="203" stroke="#dedede" stroke-width="1" />
<text x="534.8" y="193.4" font-size="12" fill="#444" text-anchor="middle">G</text>
<line x1="654.4" y1="178" x2="654.4" y2="203" stroke="#dedede" stroke-width="1" />
<text x="614.5" y="193.4" font-size="12" fill="#444" text-anchor="middle">H</text>
<line x1="734.4" y1="178" x2="734.4" y2="203" stroke="#dedede" stroke-width="1" />
<text x="694.4" y="193.4" font-size="12" fill="#444" text-anchor="middle">I</text>
<line x1="756.5" y1="178" x2="756.5" y2="203" stroke="#dedede" stroke-width="1" />
<text x="745.5" y="193.4" font-size="12" fill="#444" text-anchor="middle">J</text>
<line x1="836.5" y1="178" x2="836.5" y2="203" stroke="#dedede" stroke-width="1" />
<text x="796.5" y="193.4" font-size="12" fill="#444" text-anchor="middle">K</text>
<line x1="916.4" y1="178" x2="916.4" y2="203" stroke="#dedede" stroke-width="1" />
<text x="876.5" y="193.4" font-size="12" fill="#444" text-anchor="middle">L</text>
<line x1="995.8" y1="178" x2="995.8" y2="203" stroke="#dedede" stroke-width="1" />
<text x="956.1" y="193.4" font-size="12" fill="#444" text-anchor="middle">M</text>
<line x1="1075.6" y1="178" x2="1075.6" y2="203" stroke="#dedede" stroke-width="1" />
<text x="1035.7" y="193.4" font-size="12" fill="#444" text-anchor="middle">N</text>
<line x1="1155.6" y1="178" x2="1155.6" y2="203" stroke="#dedede" stroke-width="1" />
<text x="1115.6" y="193.4" font-size="12" fill="#444" text-anchor="middle">O</text>
<line x1="1177.3" y1="178" x2="1177.3" y2="203" stroke="#dedede" stroke-width="1" />
<text x="1166.4" y="193.4" font-size="12" fill="#444" text-anchor="middle">P</text>
<line x1="1257.7" y1="178" x2="1257.7" y2="203" stroke="#dedede" stroke-width="1" />
<text x="1217.5" y="193.4" font-size="12" fill="#444" text-anchor="middle">Q</text>
<line x1="1337.6" y1="178" x2="1337.6" y2="203" stroke="#dedede" stroke-width="1" />
<text x="1297.7" y="193.4" font-size="12" fill="#444" text-anchor="middle">R</text>
<line x1="1417.5" y1="178" x2="1417.5" y2="203" stroke="#dedede" stroke-width="1" />
<text x="1377.5" y="193.4" font-size="12" fill="#444" text-anchor="middle">S</text>
<line x1="1496.9" y1="178" x2="1496.9" y2="203" stroke="#dedede" stroke-width="1" />
<text x="1457.2" y="193.4" font-size="12" fill="#444" text-anchor="middle">T</text>
<line x1="1576" y1="178" x2="1576" y2="203" stroke="#dedede" stroke-width="1" />
<text x="1536.5" y="193.4" font-size="12" fill="#444" text-anchor="middle">U</text>
<line x1="0" y1="203.6" x2="1566" y2="203.6" stroke="#c6c6c6" stroke-width="1.2" />
<rect x="0" y="204" width="24" height="674" fill="#f9f9f9" stroke="none" stroke-width="1" rx="0" />
<line x1="0" y1="204.5" x2="24" y2="204.5" stroke="#1e7145" stroke-width="1.5" />
<line x1="0" y1="221.02" x2="24" y2="221.02" stroke="#e2e2e2" stroke-width="1" />
<text x="10.85" y="218.40" font-size="12" fill="#555" text-anchor="middle">2</text>
<line x1="0" y1="238.04000000000002" x2="24" y2="238.04000000000002" stroke="#e2e2e2" stroke-width="1" />
<text x="10.85" y="235.42" font-size="12" fill="#555" text-anchor="middle">3</text>
<line x1="0" y1="255.06" x2="24" y2="255.06" stroke="#e2e2e2" stroke-width="1" />
<text x="10.85" y="252.44" font-size="12" fill="#555" text-anchor="middle">4</text>
<line x1="0" y1="272.08" x2="24" y2="272.08" stroke="#e2e2e2" stroke-width="1" />
<text x="10.85" y="269.46" font-size="12" fill="#555" text-anchor="middle">5</text>
<rect x="0" y="272.08" width="24" height="17.02" fill="#e9e9e9" stroke="none" stroke-width="1" rx="0" />
<rect x="21.5" y="272.08" width="3" height="17.02" fill="#1e7145" stroke="none" stroke-width="1" rx="0" />
<line x1="0" y1="289.09999999999997" x2="24" y2="289.09999999999997" stroke="#e2e2e2" stroke-width="1" />
<text x="10.85" y="286.48" font-size="12" fill="#1e7145" text-anchor="middle">6</text>
<line x1="0" y1="306.12" x2="24" y2="306.12" stroke="#e2e2e2" stroke-width="1" />
<text x="10.85" y="303.50" font-size="12" fill="#555" text-anchor="middle">7</text>
<line x1="0" y1="323.14" x2="24" y2="323.14" stroke="#e2e2e2" stroke-width="1" />
<text x="10.85" y="320.52" font-size="12" fill="#555" text-anchor="middle">8</text>
<line x1="0" y1="340.15999999999997" x2="24" y2="340.15999999999997" stroke="#e2e2e2" stroke-width="1" />
<text x="10.85" y="337.54" font-size="12" fill="#555" text-anchor="middle">9</text>
<line x1="0" y1="357.17999999999995" x2="24" y2="357.17999999999995" stroke="#e2e2e2" stroke-width="1" />
<text x="10.85" y="354.56" font-size="12" fill="#555" text-anchor="middle">10</text>
<line x1="0" y1="374.2" x2="24" y2="374.2" stroke="#e2e2e2" stroke-width="1" />
<text x="10.85" y="371.58" font-size="12" fill="#555" text-anchor="middle">11</text>
<line x1="0" y1="391.21999999999997" x2="24" y2="391.21999999999997" stroke="#e2e2e2" stroke-width="1" />
<text x="10.85" y="388.60" font-size="12" fill="#555" text-anchor="middle">12</text>
<line x1="0" y1="408.24" x2="24" y2="408.24" stroke="#e2e2e2" stroke-width="1" />
<text x="10.85" y="405.62" font-size="12" fill="#555" text-anchor="middle">13</text>
<line x1="0" y1="425.26" x2="24" y2="425.26" stroke="#e2e2e2" stroke-width="1" />
<text x="10.85" y="422.64" font-size="12" fill="#555" text-anchor="middle">14</text>
<line x1="0" y1="442.28" x2="24" y2="442.28" stroke="#e2e2e2" stroke-width="1" />
<text x="10.85" y="439.66" font-size="12" fill="#555" text-anchor="middle">15</text>
<line x1="0" y1="459.29999999999995" x2="24" y2="459.29999999999995" stroke="#e2e2e2" stroke-width="1" />
<text x="10.85" y="456.68" font-size="12" fill="#555" text-anchor="middle">16</text>
<line x1="0" y1="476.31999999999994" x2="24" y2="476.31999999999994" stroke="#e2e2e2" stroke-width="1" />
<text x="10.85" y="473.70" font-size="12" fill="#555" text-anchor="middle">17</text>
<line x1="0" y1="493.34" x2="24" y2="493.34" stroke="#e2e2e2" stroke-width="1" />
<text x="10.85" y="490.72" font-size="12" fill="#555" text-anchor="middle">18</text>
<line x1="0" y1="510.35999999999996" x2="24" y2="510.35999999999996" stroke="#e2e2e2" stroke-width="1" />
<text x="10.85" y="507.74" font-size="12" fill="#555" text-anchor="middle">19</text>
<line x1="0" y1="527.38" x2="24" y2="527.38" stroke="#e2e2e2" stroke-width="1" />
<text x="10.85" y="524.76" font-size="12" fill="#555" text-anchor="middle">20</text>
<line x1="0" y1="544.4" x2="24" y2="544.4" stroke="#e2e2e2" stroke-width="1" />
<text x="10.85" y="541.78" font-size="12" fill="#555" text-anchor="middle">21</text>
<line x1="0" y1="561.42" x2="24" y2="561.42" stroke="#e2e2e2" stroke-width="1" />
<text x="10.85" y="558.80" font-size="12" fill="#555" text-anchor="middle">22</text>
<line x1="0" y1="578.44" x2="24" y2="578.44" stroke="#e2e2e2" stroke-width="1" />
<text x="10.85" y="575.82" font-size="12" fill="#555" text-anchor="middle">23</text>
<line x1="0" y1="595.46" x2="24" y2="595.46" stroke="#e2e2e2" stroke-width="1" />
<text x="10.85" y="592.84" font-size="12" fill="#555" text-anchor="middle">24</text>
<line x1="0" y1="612.48" x2="24" y2="612.48" stroke="#e2e2e2" stroke-width="1" />
<text x="10.85" y="609.86" font-size="12" fill="#555" text-anchor="middle">25</text>
<line x1="0" y1="629.5" x2="24" y2="629.5" stroke="#e2e2e2" stroke-width="1" />
<text x="10.85" y="626.88" font-size="12" fill="#555" text-anchor="middle">26</text>
<line x1="0" y1="646.52" x2="24" y2="646.52" stroke="#e2e2e2" stroke-width="1" />
<text x="10.85" y="643.90" font-size="12" fill="#555" text-anchor="middle">27</text>
<line x1="0" y1="663.54" x2="24" y2="663.54" stroke="#e2e2e2" stroke-width="1" />
<text x="10.85" y="660.92" font-size="12" fill="#555" text-anchor="middle">28</text>
<line x1="0" y1="680.56" x2="24" y2="680.56" stroke="#e2e2e2" stroke-width="1" />
<text x="10.85" y="677.94" font-size="12" fill="#555" text-anchor="middle">29</text>
<line x1="0" y1="697.5799999999999" x2="24" y2="697.5799999999999" stroke="#e2e2e2" stroke-width="1" />
<text x="10.85" y="694.96" font-size="12" fill="#555" text-anchor="middle">30</text>
<line x1="0" y1="714.5999999999999" x2="24" y2="714.5999999999999" stroke="#e2e2e2" stroke-width="1" />
<text x="10.85" y="711.98" font-size="12" fill="#555" text-anchor="middle">31</text>
<line x1="0" y1="731.6199999999999" x2="24" y2="731.6199999999999" stroke="#e2e2e2" stroke-width="1" />
<text x="10.85" y="729.00" font-size="12" fill="#555" text-anchor="middle">32</text>
<line x1="0" y1="748.64" x2="24" y2="748.64" stroke="#e2e2e2" stroke-width="1" />
<text x="10.85" y="746.02" font-size="12" fill="#555" text-anchor="middle">33</text>
<line x1="0" y1="765.66" x2="24" y2="765.66" stroke="#e2e2e2" stroke-width="1" />
<text x="10.85" y="763.04" font-size="12" fill="#555" text-anchor="middle">34</text>
<line x1="0" y1="782.68" x2="24" y2="782.68" stroke="#e2e2e2" stroke-width="1" />
<text x="10.85" y="780.06" font-size="12" fill="#555" text-anchor="middle">35</text>
<line x1="0" y1="799.6999999999999" x2="24" y2="799.6999999999999" stroke="#e2e2e2" stroke-width="1" />
<text x="10.85" y="797.08" font-size="12" fill="#555" text-anchor="middle">36</text>
<line x1="0" y1="816.7199999999999" x2="24" y2="816.7199999999999" stroke="#e2e2e2" stroke-width="1" />
<text x="10.85" y="814.10" font-size="12" fill="#555" text-anchor="middle">37</text>
<line x1="0" y1="833.74" x2="24" y2="833.74" stroke="#e2e2e2" stroke-width="1" />
<text x="10.85" y="831.12" font-size="12" fill="#555" text-anchor="middle">38</text>
<line x1="0" y1="850.76" x2="24" y2="850.76" stroke="#e2e2e2" stroke-width="1" />
<text x="10.85" y="848.14" font-size="12" fill="#555" text-anchor="middle">39</text>
<line x1="0" y1="867.78" x2="24" y2="867.78" stroke="#e2e2e2" stroke-width="1" />
<text x="10.85" y="865.16" font-size="12" fill="#555" text-anchor="middle">40</text>
<line x1="0" y1="884.8" x2="24" y2="884.8" stroke="#e2e2e2" stroke-width="1" />
<text x="10.85" y="882.18" font-size="12" fill="#555" text-anchor="middle">41</text>
<defs><clipPath id="cclip"><rect x="140.3" y="200" width="132" height="700"/></clipPath></defs>
<text x="47.3" y="218.00" font-size="12.5" fill="#8c8c8c" font-weight="normal" text-anchor="start" textLength="28.5" lengthAdjust="spacingAndGlyphs">Type</text>
<text x="144.2" y="218.00" font-size="12.5" fill="#8c8c8c" font-weight="normal" text-anchor="start" textLength="274" lengthAdjust="spacingAndGlyphs">Impact Analysis &gt; Sensitivity Analysis &gt; 6 Inputs</text>
<text x="47.3" y="235.02" font-size="12.5" fill="#8c8c8c" font-weight="normal" text-anchor="start" textLength="44" lengthAdjust="spacingAndGlyphs">Created</text>
<text x="144.2" y="235.02" font-size="12.5" fill="#8c8c8c" font-weight="normal" text-anchor="start" textLength="194.5" lengthAdjust="spacingAndGlyphs">Tuesday, 7 October 2025 at 08:03</text>
<text x="47.3" y="252.04" font-size="12.5" fill="#8c8c8c" font-weight="normal" text-anchor="start" textLength="48" lengthAdjust="spacingAndGlyphs">Updated</text>
<text x="144.2" y="252.04" font-size="12.5" fill="#8c8c8c" font-weight="normal" text-anchor="start" textLength="194.5" lengthAdjust="spacingAndGlyphs">Tuesday, 7 October 2025 at 08:08</text>
<rect x="43.2" y="289.1" width="228.8" height="17.62" fill="#808080" stroke="none" stroke-width="1" rx="0" />
<text x="47.5" y="303.10" font-size="12.5" fill="#fff" font-weight="bold" text-anchor="start" textLength="32.3" lengthAdjust="spacingAndGlyphs">Input</text>
<rect x="140" y="306.72" width="132" height="16.419999999999998" fill="#dde8f5" stroke="none" stroke-width="1" rx="0" />
<line x1="140" y1="323.44" x2="272" y2="323.44" stroke="#1a1a1a" stroke-width="1.5" stroke-dasharray="1.1,0.75" opacity="0.9"/>
<text x="47.5" y="320.12" font-size="12.5" fill="#000" font-weight="normal" text-anchor="start" textLength="31.2" lengthAdjust="spacingAndGlyphs">Name</text>
<text x="268.3" y="320.12" font-size="12.5" fill="#000" font-weight="normal" text-anchor="end" textLength="50" lengthAdjust="spacingAndGlyphs">Tax Rate</text>
<rect x="140" y="325.14" width="132" height="15.02" fill="#dde8f5" stroke="none" stroke-width="1" rx="0" />
<line x1="140" y1="340.46" x2="272" y2="340.46" stroke="#1a1a1a" stroke-width="1.5" stroke-dasharray="1.1,0.75" opacity="0.9"/>
<text x="47.5" y="337.14" font-size="12.5" fill="#000" font-weight="normal" text-anchor="start" textLength="57.2" lengthAdjust="spacingAndGlyphs">Reference</text>
<text x="268.3" y="337.14" font-size="12.5" fill="#000" font-weight="normal" text-anchor="end" textLength="32.4" lengthAdjust="spacingAndGlyphs">30.0%</text>
<rect x="43.2" y="357.18" width="228.8" height="17.62" fill="#808080" stroke="none" stroke-width="1" rx="0" />
<text x="47.5" y="371.18" font-size="12.5" fill="#fff" font-weight="bold" text-anchor="start" textLength="32.3" lengthAdjust="spacingAndGlyphs">Input</text>
<rect x="140" y="374.8" width="132" height="16.419999999999998" fill="#dde8f5" stroke="none" stroke-width="1" rx="0" />
<line x1="140" y1="391.52" x2="272" y2="391.52" stroke="#1a1a1a" stroke-width="1.5" stroke-dasharray="1.1,0.75" opacity="0.9"/>
<text x="47.5" y="388.20" font-size="12.5" fill="#000" font-weight="normal" text-anchor="start" textLength="31.2" lengthAdjust="spacingAndGlyphs">Name</text>
<text x="268.3" y="388.20" font-size="12.5" fill="#000" font-weight="normal" text-anchor="end" textLength="130" lengthAdjust="spacingAndGlyphs" clip-path="url(#cclip)">Rev. Growth (Yr 1 - 3)</text>
<rect x="140" y="393.22" width="132" height="15.02" fill="#dde8f5" stroke="none" stroke-width="1" rx="0" />
<line x1="140" y1="408.54" x2="272" y2="408.54" stroke="#1a1a1a" stroke-width="1.5" stroke-dasharray="1.1,0.75" opacity="0.9"/>
<text x="47.5" y="405.22" font-size="12.5" fill="#000" font-weight="normal" text-anchor="start" textLength="57.2" lengthAdjust="spacingAndGlyphs">Reference</text>
<text x="268.3" y="405.22" font-size="12.5" fill="#000" font-weight="normal" text-anchor="end" textLength="25.1" lengthAdjust="spacingAndGlyphs">5.0%</text>
<rect x="43.2" y="425.26" width="228.8" height="17.62" fill="#808080" stroke="none" stroke-width="1" rx="0" />
<text x="47.5" y="439.26" font-size="12.5" fill="#fff" font-weight="bold" text-anchor="start" textLength="32.3" lengthAdjust="spacingAndGlyphs">Input</text>
<rect x="140" y="442.88" width="132" height="16.419999999999998" fill="#dde8f5" stroke="none" stroke-width="1" rx="0" />
<line x1="140" y1="459.60" x2="272" y2="459.60" stroke="#1a1a1a" stroke-width="1.5" stroke-dasharray="1.1,0.75" opacity="0.9"/>
<text x="47.5" y="456.28" font-size="12.5" fill="#000" font-weight="normal" text-anchor="start" textLength="31.2" lengthAdjust="spacingAndGlyphs">Name</text>
<text x="268.3" y="456.28" font-size="12.5" fill="#000" font-weight="normal" text-anchor="end" textLength="115.3" lengthAdjust="spacingAndGlyphs">Rev. Growth (Yr 4+)</text>
<rect x="140" y="461.29999999999995" width="132" height="15.02" fill="#dde8f5" stroke="none" stroke-width="1" rx="0" />
<line x1="140" y1="476.62" x2="272" y2="476.62" stroke="#1a1a1a" stroke-width="1.5" stroke-dasharray="1.1,0.75" opacity="0.9"/>
<text x="47.5" y="473.30" font-size="12.5" fill="#000" font-weight="normal" text-anchor="start" textLength="57.2" lengthAdjust="spacingAndGlyphs">Reference</text>
<text x="268.3" y="473.30" font-size="12.5" fill="#000" font-weight="normal" text-anchor="end" textLength="25.1" lengthAdjust="spacingAndGlyphs">3.0%</text>
<rect x="43.2" y="493.34" width="228.8" height="17.62" fill="#808080" stroke="none" stroke-width="1" rx="0" />
<text x="47.5" y="507.34" font-size="12.5" fill="#fff" font-weight="bold" text-anchor="start" textLength="32.3" lengthAdjust="spacingAndGlyphs">Input</text>
<rect x="140" y="510.96000000000004" width="132" height="16.419999999999998" fill="#dde8f5" stroke="none" stroke-width="1" rx="0" />
<line x1="140" y1="527.68" x2="272" y2="527.68" stroke="#1a1a1a" stroke-width="1.5" stroke-dasharray="1.1,0.75" opacity="0.9"/>
<text x="47.5" y="524.36" font-size="12.5" fill="#000" font-weight="normal" text-anchor="start" textLength="31.2" lengthAdjust="spacingAndGlyphs">Name</text>
<text x="268.3" y="524.36" font-size="12.5" fill="#000" font-weight="normal" text-anchor="end" textLength="34" lengthAdjust="spacingAndGlyphs">WACC</text>
<rect x="140" y="529.38" width="132" height="15.02" fill="#dde8f5" stroke="none" stroke-width="1" rx="0" />
<line x1="140" y1="544.70" x2="272" y2="544.70" stroke="#1a1a1a" stroke-width="1.5" stroke-dasharray="1.1,0.75" opacity="0.9"/>
<text x="47.5" y="541.38" font-size="12.5" fill="#000" font-weight="normal" text-anchor="start" textLength="57.2" lengthAdjust="spacingAndGlyphs">Reference</text>
<text x="268.3" y="541.38" font-size="12.5" fill="#000" font-weight="normal" text-anchor="end" textLength="25.1" lengthAdjust="spacingAndGlyphs">8.0%</text>
<rect x="43.2" y="561.4200000000001" width="228.8" height="17.62" fill="#808080" stroke="none" stroke-width="1" rx="0" />
<text x="47.5" y="575.42" font-size="12.5" fill="#fff" font-weight="bold" text-anchor="start" textLength="32.3" lengthAdjust="spacingAndGlyphs">Input</text>
<rect x="140" y="579.0400000000001" width="132" height="16.419999999999998" fill="#dde8f5" stroke="none" stroke-width="1" rx="0" />
<line x1="140" y1="595.76" x2="272" y2="595.76" stroke="#1a1a1a" stroke-width="1.5" stroke-dasharray="1.1,0.75" opacity="0.9"/>
<text x="47.5" y="592.44" font-size="12.5" fill="#000" font-weight="normal" text-anchor="start" textLength="31.2" lengthAdjust="spacingAndGlyphs">Name</text>
<text x="268.3" y="592.44" font-size="12.5" fill="#000" font-weight="normal" text-anchor="end" textLength="96.7" lengthAdjust="spacingAndGlyphs">Terminal Growth</text>
<rect x="140" y="597.46" width="132" height="15.02" fill="#dde8f5" stroke="none" stroke-width="1" rx="0" />
<line x1="140" y1="612.78" x2="272" y2="612.78" stroke="#1a1a1a" stroke-width="1.5" stroke-dasharray="1.1,0.75" opacity="0.9"/>
<text x="47.5" y="609.46" font-size="12.5" fill="#000" font-weight="normal" text-anchor="start" textLength="57.2" lengthAdjust="spacingAndGlyphs">Reference</text>
<text x="268.3" y="609.46" font-size="12.5" fill="#000" font-weight="normal" text-anchor="end" textLength="25.1" lengthAdjust="spacingAndGlyphs">2.0%</text>
<rect x="43.2" y="629.5" width="228.8" height="17.62" fill="#808080" stroke="none" stroke-width="1" rx="0" />
<text x="47.5" y="643.50" font-size="12.5" fill="#fff" font-weight="bold" text-anchor="start" textLength="32.3" lengthAdjust="spacingAndGlyphs">Input</text>
<rect x="140" y="647.12" width="132" height="16.419999999999998" fill="#dde8f5" stroke="none" stroke-width="1" rx="0" />
<line x1="140" y1="663.84" x2="272" y2="663.84" stroke="#1a1a1a" stroke-width="1.5" stroke-dasharray="1.1,0.75" opacity="0.9"/>
<text x="47.5" y="660.52" font-size="12.5" fill="#000" font-weight="normal" text-anchor="start" textLength="31.2" lengthAdjust="spacingAndGlyphs">Name</text>
<text x="268.3" y="660.52" font-size="12.5" fill="#000" font-weight="normal" text-anchor="end" textLength="74.5" lengthAdjust="spacingAndGlyphs">Interest Rate</text>
<rect x="140" y="665.54" width="132" height="15.02" fill="#dde8f5" stroke="none" stroke-width="1" rx="0" />
<line x1="140" y1="680.86" x2="272" y2="680.86" stroke="#1a1a1a" stroke-width="1.5" stroke-dasharray="1.1,0.75" opacity="0.9"/>
<text x="47.5" y="677.54" font-size="12.5" fill="#000" font-weight="normal" text-anchor="start" textLength="57.2" lengthAdjust="spacingAndGlyphs">Reference</text>
<text x="268.3" y="677.54" font-size="12.5" fill="#000" font-weight="normal" text-anchor="end" textLength="25.1" lengthAdjust="spacingAndGlyphs">4.0%</text>
<rect x="43.2" y="697.5799999999999" width="228.8" height="17.62" fill="#ffc000" stroke="none" stroke-width="1" rx="0" />
<text x="47.5" y="711.58" font-size="12.5" fill="#000" font-weight="bold" text-anchor="start" textLength="42.8" lengthAdjust="spacingAndGlyphs">Output</text>
<rect x="140" y="715.1999999999999" width="132" height="16.419999999999998" fill="#dde8f5" stroke="none" stroke-width="1" rx="0" />
<line x1="140" y1="731.92" x2="272" y2="731.92" stroke="#1a1a1a" stroke-width="1.5" stroke-dasharray="1.1,0.75" opacity="0.9"/>
<text x="47.5" y="728.60" font-size="12.5" fill="#000" font-weight="normal" text-anchor="start" textLength="31.2" lengthAdjust="spacingAndGlyphs">Name</text>
<text x="268.3" y="728.60" font-size="12.5" fill="#000" font-weight="normal" text-anchor="end" textLength="94.3" lengthAdjust="spacingAndGlyphs">Enterprise Value</text>
<rect x="140" y="733.62" width="132" height="15.02" fill="#dde8f5" stroke="none" stroke-width="1" rx="0" />
<line x1="140" y1="748.94" x2="272" y2="748.94" stroke="#1a1a1a" stroke-width="1.5" stroke-dasharray="1.1,0.75" opacity="0.9"/>
<text x="47.5" y="745.62" font-size="12.5" fill="#000" font-weight="normal" text-anchor="start" textLength="57.2" lengthAdjust="spacingAndGlyphs">Reference</text>
<text x="268.3" y="745.62" font-size="12.5" fill="#000" font-weight="normal" text-anchor="end" textLength="19.5" lengthAdjust="spacingAndGlyphs">224</text>
<rect x="43.2" y="765.66" width="228.8" height="17.62" fill="#808080" stroke="none" stroke-width="1" rx="0" />
<text x="47.5" y="779.66" font-size="12.5" fill="#fff" font-weight="bold" text-anchor="start" textLength="95.8" lengthAdjust="spacingAndGlyphs">Output Settings</text>
<rect x="140" y="783.28" width="132" height="16.419999999999998" fill="#dde8f5" stroke="none" stroke-width="1" rx="0" />
<line x1="140" y1="800.00" x2="272" y2="800.00" stroke="#1a1a1a" stroke-width="1.5" stroke-dasharray="1.1,0.75" opacity="0.9"/>
<text x="47.5" y="796.68" font-size="12.5" fill="#000" font-weight="normal" text-anchor="start" textLength="71.8" lengthAdjust="spacingAndGlyphs">Sensitivity %</text>
<text x="268.3" y="796.68" font-size="12.5" fill="#000" font-weight="normal" text-anchor="end" textLength="20.6" lengthAdjust="spacingAndGlyphs">25%</text>
<rect x="140" y="801.6999999999999" width="132" height="15.02" fill="#dde8f5" stroke="none" stroke-width="1" rx="0" />
<line x1="140" y1="817.02" x2="272" y2="817.02" stroke="#1a1a1a" stroke-width="1.5" stroke-dasharray="1.1,0.75" opacity="0.9"/>
<text x="47.5" y="813.70" font-size="12.5" fill="#000" font-weight="normal" text-anchor="start" textLength="66.5" lengthAdjust="spacingAndGlyphs">Blue is +ve?</text>
<text x="268.3" y="813.70" font-size="12.5" fill="#000" font-weight="normal" text-anchor="end" textLength="18.8" lengthAdjust="spacingAndGlyphs">Yes</text>
<rect x="140" y="818.72" width="132" height="15.02" fill="#dde8f5" stroke="none" stroke-width="1" rx="0" />
<line x1="140" y1="834.04" x2="272" y2="834.04" stroke="#1a1a1a" stroke-width="1.5" stroke-dasharray="1.1,0.75" opacity="0.9"/>
<text x="47.5" y="830.72" font-size="12.5" fill="#000" font-weight="normal" text-anchor="start" textLength="57.8" lengthAdjust="spacingAndGlyphs">Scenarios?</text>
<text x="268.3" y="830.72" font-size="12.5" fill="#000" font-weight="normal" text-anchor="end" textLength="18.8" lengthAdjust="spacingAndGlyphs">Yes</text>
<rect x="140.5" y="272.58" width="130" height="16.52" fill="none" stroke="#1e7145" stroke-width="2.2" rx="0" />
<rect x="267.5" y="285.59999999999997" width="7" height="7" fill="#1e7145" stroke="#fff" stroke-width="0.8" rx="0" />
<rect x="335.5" y="290.5" width="398.5" height="390.5" fill="#ffffff" stroke="#e0e0e0" stroke-width="1.2" rx="0" />
<rect x="756.5" y="290" width="398.5" height="186.5" fill="#ffffff" stroke="#e0e0e0" stroke-width="1.2" rx="0" />
<rect x="1177.5" y="290" width="422.5" height="186.5" fill="#ffffff" stroke="#e0e0e0" stroke-width="1.2" rx="0" />
<rect x="756.5" y="493.5" width="398.5" height="187.0" fill="#ffffff" stroke="#e0e0e0" stroke-width="1.2" rx="0" />
<rect x="1177.5" y="493.5" width="422.5" height="187.0" fill="#ffffff" stroke="#e0e0e0" stroke-width="1.2" rx="0" />
<text x="421.7" y="315.8" font-size="17.5" fill="#595959" font-weight="bold" text-anchor="start" textLength="224" lengthAdjust="spacingAndGlyphs" >Impact of 25% Δ inputs on</text>
<text x="463" y="337.8" font-size="17.5" fill="#595959" font-weight="bold" text-anchor="start" textLength="142.8" lengthAdjust="spacingAndGlyphs" >Enterprise Value</text>
<text x="476.7" y="383.3" font-size="13" fill="#595959" font-weight="normal" text-anchor="end" textLength="34.19999999999999" lengthAdjust="spacingAndGlyphs" >WACC</text>
<text x="476.7" y="426.3" font-size="13" fill="#595959" font-weight="normal" text-anchor="end" textLength="53.19999999999999" lengthAdjust="spacingAndGlyphs" >Tax Rate</text>
<text x="476.7" y="469" font-size="13" fill="#595959" font-weight="normal" text-anchor="end" textLength="102.69999999999999" lengthAdjust="spacingAndGlyphs" >Terminal Growth</text>
<text x="476.7" y="511.8" font-size="13" fill="#595959" font-weight="normal" text-anchor="end" textLength="134.2" lengthAdjust="spacingAndGlyphs" >Rev. Growth (Yr 1 - 3)</text>
<text x="476.7" y="554.4" font-size="13" fill="#595959" font-weight="normal" text-anchor="end" textLength="120.69999999999999" lengthAdjust="spacingAndGlyphs" >Rev. Growth (Yr 4+)</text>
<text x="476.7" y="596.3" font-size="13" fill="#595959" font-weight="normal" text-anchor="end" textLength="78.69999999999999" lengthAdjust="spacingAndGlyphs" >Interest Rate</text>
<line x1="577.5" y1="357.5" x2="577.5" y2="613.5" stroke="#d9d9d9" stroke-width="1" />
<line x1="573.5" y1="357.5" x2="577.5" y2="357.5" stroke="#d9d9d9" stroke-width="1" />
<line x1="573.5" y1="400.1666666666667" x2="577.5" y2="400.1666666666667" stroke="#d9d9d9" stroke-width="1" />
<line x1="573.5" y1="442.8333333333333" x2="577.5" y2="442.8333333333333" stroke="#d9d9d9" stroke-width="1" />
<line x1="573.5" y1="485.5" x2="577.5" y2="485.5" stroke="#d9d9d9" stroke-width="1" />
<line x1="573.5" y1="528.1666666666666" x2="577.5" y2="528.1666666666666" stroke="#d9d9d9" stroke-width="1" />
<line x1="573.5" y1="570.8333333333334" x2="577.5" y2="570.8333333333334" stroke="#d9d9d9" stroke-width="1" />
<line x1="573.5" y1="613.5" x2="577.5" y2="613.5" stroke="#d9d9d9" stroke-width="1" />
<rect x="522.8" y="362.5" width="54.40000000000009" height="33.0" fill="#1f497d" stroke="none" stroke-width="1" rx="0" />
<rect x="577.2" y="362.5" width="111.5" height="33.0" fill="#f7871a" stroke="none" stroke-width="1" rx="0" />
<rect x="551" y="404.8" width="26.200000000000045" height="33.19999999999999" fill="#1f497d" stroke="none" stroke-width="1" rx="0" />
<rect x="577.2" y="404.8" width="26.799999999999955" height="33.19999999999999" fill="#f7871a" stroke="none" stroke-width="1" rx="0" />
<rect x="577.2" y="447.5" width="16.799999999999955" height="33.19999999999999" fill="#1f497d" stroke="none" stroke-width="1" rx="0" />
<rect x="563.5" y="447.5" width="13.700000000000045" height="33.19999999999999" fill="#f7871a" stroke="none" stroke-width="1" rx="0" />
<rect x="577.2" y="490.2" width="7.7999999999999545" height="33.19999999999999" fill="#1f497d" stroke="none" stroke-width="1" rx="0" />
<rect x="570" y="490.2" width="7.2000000000000455" height="33.19999999999999" fill="#f7871a" stroke="none" stroke-width="1" rx="0" />
<rect x="577.2" y="532.8" width="4.7999999999999545" height="33.200000000000045" fill="#1f497d" stroke="none" stroke-width="1" rx="0" />
<rect x="573" y="532.8" width="4.2000000000000455" height="33.200000000000045" fill="#f7871a" stroke="none" stroke-width="1" rx="0" />
<text x="474.6" y="634.9" font-size="13" fill="#595959" font-weight="normal" text-anchor="start" textLength="31.0" lengthAdjust="spacingAndGlyphs" >(40%)</text>
<text x="518.5" y="634.9" font-size="13" fill="#595959" font-weight="normal" text-anchor="start" textLength="30.899999999999977" lengthAdjust="spacingAndGlyphs" >(20%)</text>
<text x="569.8" y="634.9" font-size="13" fill="#595959" font-weight="normal" text-anchor="start" textLength="14.200000000000045" lengthAdjust="spacingAndGlyphs" >0%</text>
<text x="610" y="634.9" font-size="13" fill="#595959" font-weight="normal" text-anchor="start" textLength="21.799999999999955" lengthAdjust="spacingAndGlyphs" >20%</text>
<text x="653.6" y="634.9" font-size="13" fill="#595959" font-weight="normal" text-anchor="start" textLength="21.899999999999977" lengthAdjust="spacingAndGlyphs" >40%</text>
<text x="697.4" y="634.9" font-size="13" fill="#595959" font-weight="normal" text-anchor="start" textLength="21.899999999999977" lengthAdjust="spacingAndGlyphs" >60%</text>
<rect x="470.6" y="655.3" width="8.8" height="8.3" fill="#f7871a" stroke="none" stroke-width="1" rx="0" />
<text x="483.75" y="664" font-size="13" fill="#595959" font-weight="normal" text-anchor="start" textLength="44.5" lengthAdjust="spacingAndGlyphs" >-25% Δ</text>
<rect x="542" y="655.3" width="9" height="8.3" fill="#1f497d" stroke="none" stroke-width="1" rx="0" />
<text x="555.2" y="664" font-size="13" fill="#595959" font-weight="normal" text-anchor="start" textLength="47.8" lengthAdjust="spacingAndGlyphs" >+25% Δ</text>
<text x="856.3" y="312.9" font-size="14.5" fill="#595959" font-weight="bold" text-anchor="start" textLength="197.29999999999995" lengthAdjust="spacingAndGlyphs" >Tax Rate vs Enterprise Value</text>
<line x1="827.5" y1="331.7" x2="827.5" y2="413.4" stroke="#d9d9d9" stroke-width="1" />
<line x1="823.5" y1="331.7" x2="827.5" y2="331.7" stroke="#d9d9d9" stroke-width="1" />
<text x="815" y="336.3" font-size="13" fill="#595959" font-weight="normal" text-anchor="end" >300</text>
<line x1="823.5" y1="359.3" x2="827.5" y2="359.3" stroke="#d9d9d9" stroke-width="1" />
<text x="815" y="363.90000000000003" font-size="13" fill="#595959" font-weight="normal" text-anchor="end" >200</text>
<line x1="823.5" y1="386.3" x2="827.5" y2="386.3" stroke="#d9d9d9" stroke-width="1" />
<text x="815" y="390.90000000000003" font-size="13" fill="#595959" font-weight="normal" text-anchor="end" >100</text>
<line x1="823.5" y1="413.4" x2="827.5" y2="413.4" stroke="#d9d9d9" stroke-width="1" />
<text x="815" y="418.0" font-size="13" fill="#595959" font-weight="normal" text-anchor="end" >-</text>
<line x1="827.5" y1="413.4" x2="1123.5" y2="413.4" stroke="#d9d9d9" stroke-width="1" />
<line x1="827.5" y1="413.4" x2="827.5" y2="417.4" stroke="#d9d9d9" stroke-width="1" />
<text x="827.5" y="435.5" font-size="13" fill="#595959" font-weight="normal" text-anchor="middle" >0.0%</text>
<line x1="886.8" y1="413.4" x2="886.8" y2="417.4" stroke="#d9d9d9" stroke-width="1" />
<text x="886.8" y="435.5" font-size="13" fill="#595959" font-weight="normal" text-anchor="middle" >10.0%</text>
<line x1="945.5" y1="413.4" x2="945.5" y2="417.4" stroke="#d9d9d9" stroke-width="1" />
<text x="945.5" y="435.5" font-size="13" fill="#595959" font-weight="normal" text-anchor="middle" >20.0%</text>
<line x1="1004.8" y1="413.4" x2="1004.8" y2="417.4" stroke="#d9d9d9" stroke-width="1" />
<text x="1004.8" y="435.5" font-size="13" fill="#595959" font-weight="normal" text-anchor="middle" >30.0%</text>
<line x1="1064" y1="413.4" x2="1064" y2="417.4" stroke="#d9d9d9" stroke-width="1" />
<text x="1064" y="435.5" font-size="13" fill="#595959" font-weight="normal" text-anchor="middle" >40.0%</text>
<line x1="1123.5" y1="413.4" x2="1123.5" y2="417.4" stroke="#d9d9d9" stroke-width="1" />
<text x="1123.5" y="435.5" font-size="13" fill="#595959" font-weight="normal" text-anchor="middle" >50.0%</text>
<text x="975.4" y="457.5" font-size="16" fill="#595959" font-weight="normal" text-anchor="middle" >Tax Rate</text>
<text x="0" y="0" font-size="16" fill="#595959" text-anchor="middle" transform="translate(787.3,394.5) rotate(-90)" textLength="116" lengthAdjust="spacingAndGlyphs">Enterprise Value</text>
<circle cx="915.59" cy="337.04" r="3.6" fill="#1f497d"/>
<circle cx="933.30" cy="339.80" r="3.6" fill="#1f497d"/>
<circle cx="951.24" cy="343.02" r="3.6" fill="#1f497d"/>
<circle cx="960.21" cy="344.40" r="3.6" fill="#1f497d"/>
<circle cx="969.18" cy="345.78" r="3.6" fill="#1f497d"/>
<circle cx="977.92" cy="347.39" r="3.6" fill="#1f497d"/>
<circle cx="986.89" cy="349.00" r="3.6" fill="#1f497d"/>
<circle cx="995.63" cy="350.15" r="3.6" fill="#1f497d"/>
<circle cx="1004.60" cy="351.76" r="3.6" fill="#1f497d"/>
<circle cx="1013.34" cy="353.60" r="3.6" fill="#1f497d"/>
<circle cx="1022.31" cy="354.75" r="3.6" fill="#1f497d"/>
<circle cx="1031.28" cy="356.13" r="3.6" fill="#1f497d"/>
<circle cx="1040.02" cy="357.97" r="3.6" fill="#1f497d"/>
<circle cx="1048.99" cy="359.35" r="3.6" fill="#1f497d"/>
<circle cx="1057.73" cy="360.50" r="3.6" fill="#1f497d"/>
<circle cx="1075.67" cy="363.95" r="3.6" fill="#1f497d"/>
<circle cx="1093.61" cy="366.48" r="3.6" fill="#1f497d"/>
<text x="1231" y="312.9" font-size="14.5" fill="#595959" font-weight="bold" text-anchor="start" textLength="289.70000000000005" lengthAdjust="spacingAndGlyphs" >Rev. Growth (Yr 1 - 3) vs Enterprise Value</text>
<line x1="1248.7" y1="331.7" x2="1248.7" y2="413.4" stroke="#d9d9d9" stroke-width="1" />
<line x1="1244.7" y1="331.7" x2="1248.7" y2="331.7" stroke="#d9d9d9" stroke-width="1" />
<text x="1236" y="336.3" font-size="13" fill="#595959" font-weight="normal" text-anchor="end" >250</text>
<line x1="1244.7" y1="348" x2="1248.7" y2="348" stroke="#d9d9d9" stroke-width="1" />
<text x="1236" y="352.6" font-size="13" fill="#595959" font-weight="normal" text-anchor="end" >240</text>
<line x1="1244.7" y1="364.4" x2="1248.7" y2="364.4" stroke="#d9d9d9" stroke-width="1" />
<text x="1236" y="369.0" font-size="13" fill="#595959" font-weight="normal" text-anchor="end" >230</text>
<line x1="1244.7" y1="380.5" x2="1248.7" y2="380.5" stroke="#d9d9d9" stroke-width="1" />
<text x="1236" y="385.1" font-size="13" fill="#595959" font-weight="normal" text-anchor="end" >220</text>
<line x1="1244.7" y1="396.8" x2="1248.7" y2="396.8" stroke="#d9d9d9" stroke-width="1" />
<text x="1236" y="401.40000000000003" font-size="13" fill="#595959" font-weight="normal" text-anchor="end" >210</text>
<line x1="1244.7" y1="413.4" x2="1248.7" y2="413.4" stroke="#d9d9d9" stroke-width="1" />
<text x="1236" y="418.0" font-size="13" fill="#595959" font-weight="normal" text-anchor="end" >200</text>
<line x1="1248.7" y1="413.4" x2="1547.9" y2="413.4" stroke="#d9d9d9" stroke-width="1" />
<line x1="1248.7" y1="413.4" x2="1248.7" y2="417.4" stroke="#d9d9d9" stroke-width="1" />
<text x="1248.7" y="435.5" font-size="13" fill="#595959" font-weight="normal" text-anchor="middle" >0.0%</text>
<line x1="1323.4" y1="413.4" x2="1323.4" y2="417.4" stroke="#d9d9d9" stroke-width="1" />
<text x="1323.4" y="435.5" font-size="13" fill="#595959" font-weight="normal" text-anchor="middle" >2.0%</text>
<line x1="1398.4" y1="413.4" x2="1398.4" y2="417.4" stroke="#d9d9d9" stroke-width="1" />
<text x="1398.4" y="435.5" font-size="13" fill="#595959" font-weight="normal" text-anchor="middle" >4.0%</text>
<line x1="1473" y1="413.4" x2="1473" y2="417.4" stroke="#d9d9d9" stroke-width="1" />
<text x="1473" y="435.5" font-size="13" fill="#595959" font-weight="normal" text-anchor="middle" >6.0%</text>
<line x1="1547.9" y1="413.4" x2="1547.9" y2="417.4" stroke="#d9d9d9" stroke-width="1" />
<text x="1547.9" y="435.5" font-size="13" fill="#595959" font-weight="normal" text-anchor="middle" >8.0%</text>
<text x="1398.4" y="457.5" font-size="16" fill="#595959" font-weight="normal" text-anchor="middle" >Rev. Growth (Yr 1 - 3)</text>
<text x="0" y="0" font-size="16" fill="#595959" text-anchor="middle" transform="translate(1208.5,394.5) rotate(-90)" textLength="116" lengthAdjust="spacingAndGlyphs">Enterprise Value</text>
<circle cx="1341.34" cy="398.45" r="3.6" fill="#1f497d"/>
<circle cx="1360.43" cy="393.62" r="3.6" fill="#1f497d"/>
<circle cx="1379.29" cy="388.56" r="3.6" fill="#1f497d"/>
<circle cx="1388.49" cy="386.03" r="3.6" fill="#1f497d"/>
<circle cx="1397.69" cy="383.50" r="3.6" fill="#1f497d"/>
<circle cx="1407.35" cy="380.74" r="3.6" fill="#1f497d"/>
<circle cx="1416.55" cy="378.21" r="3.6" fill="#1f497d"/>
<circle cx="1425.98" cy="375.45" r="3.6" fill="#1f497d"/>
<circle cx="1435.64" cy="372.92" r="3.6" fill="#1f497d"/>
<circle cx="1444.84" cy="370.85" r="3.6" fill="#1f497d"/>
<circle cx="1454.04" cy="368.09" r="3.6" fill="#1f497d"/>
<circle cx="1463.70" cy="365.79" r="3.6" fill="#1f497d"/>
<circle cx="1473.13" cy="363.03" r="3.6" fill="#1f497d"/>
<circle cx="1482.33" cy="360.50" r="3.6" fill="#1f497d"/>
<circle cx="1491.99" cy="357.97" r="3.6" fill="#1f497d"/>
<circle cx="1510.39" cy="352.68" r="3.6" fill="#1f497d"/>
<circle cx="1529.25" cy="347.62" r="3.6" fill="#1f497d"/>
<text x="866" y="516.5" font-size="14.5" fill="#595959" font-weight="bold" text-anchor="start" textLength="178" lengthAdjust="spacingAndGlyphs" >WACC vs Enterprise Value</text>
<line x1="827.5" y1="535.6" x2="827.5" y2="617.5" stroke="#d9d9d9" stroke-width="1" />
<line x1="823.5" y1="535.6" x2="827.5" y2="535.6" stroke="#d9d9d9" stroke-width="1" />
<text x="815" y="540.2" font-size="13" fill="#595959" font-weight="normal" text-anchor="end" >800</text>
<line x1="823.5" y1="556.3" x2="827.5" y2="556.3" stroke="#d9d9d9" stroke-width="1" />
<text x="815" y="560.9" font-size="13" fill="#595959" font-weight="normal" text-anchor="end" >600</text>
<line x1="823.5" y1="576.5" x2="827.5" y2="576.5" stroke="#d9d9d9" stroke-width="1" />
<text x="815" y="581.1" font-size="13" fill="#595959" font-weight="normal" text-anchor="end" >400</text>
<line x1="823.5" y1="597.2" x2="827.5" y2="597.2" stroke="#d9d9d9" stroke-width="1" />
<text x="815" y="601.8000000000001" font-size="13" fill="#595959" font-weight="normal" text-anchor="end" >200</text>
<line x1="823.5" y1="617.5" x2="827.5" y2="617.5" stroke="#d9d9d9" stroke-width="1" />
<text x="815" y="622.1" font-size="13" fill="#595959" font-weight="normal" text-anchor="end" >-</text>
<line x1="827.5" y1="617.5" x2="1123.5" y2="617.5" stroke="#d9d9d9" stroke-width="1" />
<line x1="827.5" y1="617.5" x2="827.5" y2="621.5" stroke="#d9d9d9" stroke-width="1" />
<text x="827.5" y="639.5" font-size="13" fill="#595959" font-weight="normal" text-anchor="middle" >0.0%</text>
<line x1="926.4" y1="617.5" x2="926.4" y2="621.5" stroke="#d9d9d9" stroke-width="1" />
<text x="926.4" y="639.5" font-size="13" fill="#595959" font-weight="normal" text-anchor="middle" >5.0%</text>
<line x1="1024.8" y1="617.5" x2="1024.8" y2="621.5" stroke="#d9d9d9" stroke-width="1" />
<text x="1024.8" y="639.5" font-size="13" fill="#595959" font-weight="normal" text-anchor="middle" >10.0%</text>
<line x1="1123.5" y1="617.5" x2="1123.5" y2="621.5" stroke="#d9d9d9" stroke-width="1" />
<text x="1123.5" y="639.5" font-size="13" fill="#595959" font-weight="normal" text-anchor="middle" >15.0%</text>
<text x="975.4" y="661.5" font-size="16" fill="#595959" font-weight="normal" text-anchor="middle" >WACC</text>
<text x="0" y="0" font-size="16" fill="#595959" text-anchor="middle" transform="translate(787.3,598.5) rotate(-90)" textLength="116" lengthAdjust="spacingAndGlyphs">Enterprise Value</text>
<circle cx="905.93" cy="547.56" r="3.6" fill="#1f497d"/>
<circle cx="921.34" cy="567.11" r="3.6" fill="#1f497d"/>
<circle cx="937.44" cy="578.38" r="3.6" fill="#1f497d"/>
<circle cx="945.03" cy="582.29" r="3.6" fill="#1f497d"/>
<circle cx="952.85" cy="585.51" r="3.6" fill="#1f497d"/>
<circle cx="960.67" cy="588.04" r="3.6" fill="#1f497d"/>
<circle cx="969.64" cy="590.34" r="3.6" fill="#1f497d"/>
<circle cx="977.23" cy="591.95" r="3.6" fill="#1f497d"/>
<circle cx="985.05" cy="594.02" r="3.6" fill="#1f497d"/>
<circle cx="992.87" cy="595.40" r="3.6" fill="#1f497d"/>
<circle cx="1000.69" cy="596.78" r="3.6" fill="#1f497d"/>
<circle cx="1008.74" cy="597.93" r="3.6" fill="#1f497d"/>
<circle cx="1016.33" cy="598.62" r="3.6" fill="#1f497d"/>
<circle cx="1024.15" cy="599.77" r="3.6" fill="#1f497d"/>
<circle cx="1032.20" cy="600.69" r="3.6" fill="#1f497d"/>
<circle cx="1047.84" cy="601.84" r="3.6" fill="#1f497d"/>
<circle cx="1063.48" cy="603.22" r="3.6" fill="#1f497d"/>
<text x="1249.3" y="516.5" font-size="14.5" fill="#595959" font-weight="bold" text-anchor="start" textLength="253.5" lengthAdjust="spacingAndGlyphs" >Terminal Growth vs Enterprise Value</text>
<line x1="1248.7" y1="535.6" x2="1248.7" y2="617.5" stroke="#d9d9d9" stroke-width="1" />
<line x1="1244.7" y1="535.6" x2="1248.7" y2="535.6" stroke="#d9d9d9" stroke-width="1" />
<text x="1236" y="540.2" font-size="13" fill="#595959" font-weight="normal" text-anchor="end" >300</text>
<line x1="1244.7" y1="562.7" x2="1248.7" y2="562.7" stroke="#d9d9d9" stroke-width="1" />
<text x="1236" y="567.3000000000001" font-size="13" fill="#595959" font-weight="normal" text-anchor="end" >200</text>
<line x1="1244.7" y1="590.3" x2="1248.7" y2="590.3" stroke="#d9d9d9" stroke-width="1" />
<text x="1236" y="594.9" font-size="13" fill="#595959" font-weight="normal" text-anchor="end" >100</text>
<line x1="1244.7" y1="617.5" x2="1248.7" y2="617.5" stroke="#d9d9d9" stroke-width="1" />
<text x="1236" y="622.1" font-size="13" fill="#595959" font-weight="normal" text-anchor="end" >-</text>
<line x1="1248.7" y1="617.5" x2="1547.9" y2="617.5" stroke="#d9d9d9" stroke-width="1" />
<line x1="1248.7" y1="617.5" x2="1248.7" y2="621.5" stroke="#d9d9d9" stroke-width="1" />
<text x="1248.7" y="639.5" font-size="13" fill="#595959" font-weight="normal" text-anchor="middle" >0.0%</text>
<line x1="1323.4" y1="617.5" x2="1323.4" y2="621.5" stroke="#d9d9d9" stroke-width="1" />
<text x="1323.4" y="639.5" font-size="13" fill="#595959" font-weight="normal" text-anchor="middle" >1.0%</text>
<line x1="1398.4" y1="617.5" x2="1398.4" y2="621.5" stroke="#d9d9d9" stroke-width="1" />
<text x="1398.4" y="639.5" font-size="13" fill="#595959" font-weight="normal" text-anchor="middle" >2.0%</text>
<line x1="1473" y1="617.5" x2="1473" y2="621.5" stroke="#d9d9d9" stroke-width="1" />
<text x="1473" y="639.5" font-size="13" fill="#595959" font-weight="normal" text-anchor="middle" >3.0%</text>
<line x1="1547.9" y1="617.5" x2="1547.9" y2="621.5" stroke="#d9d9d9" stroke-width="1" />
<text x="1547.9" y="639.5" font-size="13" fill="#595959" font-weight="normal" text-anchor="middle" >4.0%</text>
<text x="1398.4" y="661.5" font-size="16" fill="#595959" font-weight="normal" text-anchor="middle" >Terminal Growth</text>
<text x="0" y="0" font-size="16" fill="#595959" text-anchor="middle" transform="translate(1208.5,598.5) rotate(-90)" textLength="116" lengthAdjust="spacingAndGlyphs">Enterprise Value</text>
<circle cx="1322.94" cy="562.74" r="3.6" fill="#1f497d"/>
<circle cx="1338.35" cy="561.36" r="3.6" fill="#1f497d"/>
<circle cx="1352.84" cy="559.98" r="3.6" fill="#1f497d"/>
<circle cx="1360.43" cy="559.29" r="3.6" fill="#1f497d"/>
<circle cx="1368.25" cy="558.60" r="3.6" fill="#1f497d"/>
<circle cx="1375.38" cy="557.91" r="3.6" fill="#1f497d"/>
<circle cx="1382.74" cy="557.22" r="3.6" fill="#1f497d"/>
<circle cx="1390.33" cy="556.53" r="3.6" fill="#1f497d"/>
<circle cx="1397.69" cy="555.38" r="3.6" fill="#1f497d"/>
<circle cx="1405.28" cy="554.46" r="3.6" fill="#1f497d"/>
<circle cx="1413.10" cy="553.77" r="3.6" fill="#1f497d"/>
<circle cx="1420.69" cy="552.62" r="3.6" fill="#1f497d"/>
<circle cx="1428.05" cy="551.93" r="3.6" fill="#1f497d"/>
<circle cx="1435.64" cy="551.24" r="3.6" fill="#1f497d"/>
<circle cx="1443.00" cy="550.09" r="3.6" fill="#1f497d"/>
<circle cx="1457.95" cy="548.25" r="3.6" fill="#1f497d"/>
<circle cx="1473.13" cy="545.72" r="3.6" fill="#1f497d"/>
<rect x="1566" y="176" width="354" height="737" fill="#fcfcfd" stroke="none" stroke-width="1" rx="0" />
<rect x="1566" y="176.5" width="354" height="35" fill="#ebebeb" stroke="none" stroke-width="1" rx="0" />
<line x1="1566.8" y1="176" x2="1566.8" y2="913" stroke="#cfcfcf" stroke-width="1.6" />
<text x="1588.6" y="201.6" font-size="19.5" fill="#1f1f1f" font-weight="normal" text-anchor="start" textLength="66" lengthAdjust="spacingAndGlyphs" stroke="#1f1f1f" stroke-width="0.3">Fontics</text>
<circle cx="1890" cy="194.2" r="9.4" fill="#6b6b6b"/>
<path d="M1886.3,190.5 L1893.7,197.9 M1893.7,190.5 L1886.3,197.9" fill="none" stroke="#fff" stroke-width="1.7" stroke-linecap="round"/>
<path d="M1568,211.5 H1920 V269.5 H1573 a5,5 0 0 1 -5,-5 z" fill="#f8f9fb" stroke="none" stroke-width="1" />
<path d="M1568,262.5 v2.5 a5,5 0 0 0 5,5 H1920" fill="none" stroke="#e1e6ee" stroke-width="1.4" />
<circle cx="1616.9" cy="236" r="5.4" fill="none" stroke="#253f8f" stroke-width="2"/>
<path d="M1608.3,251.2 c0.6,-5.5 4,-8.6 8.8,-8.6 c1.3,0 2.4,0.2 3.4,0.6" fill="none" stroke="#253f8f" stroke-width="2" stroke-linecap="round"/>
<path d="M1620.3,251.3 l0.8,-3.6 l6.6,-6.6 a1.9,1.9 0 0 1 2.8,2.8 l-6.6,6.6 z" fill="none" stroke="#253f8f" stroke-width="1.9" stroke-linejoin="round"/>
<circle cx="1701.7" cy="240.4" r="11.3" fill="none" stroke="#253f8f" stroke-width="2"/>
<path d="M1698.3,237.3 a3.5,3.5 0 1 1 5.2,3 c-1.2,0.7 -1.7,1.5 -1.7,2.6" fill="none" stroke="#253f8f" stroke-width="2" stroke-linecap="round"/>
<circle cx="1701.8" cy="246.6" r="1.2" fill="#253f8f"/>
<path d="M1776.5,230.4 l3.2,-0.8 c0.8,-0.2 1.5,0.2 1.8,1 l1.6,4 c0.3,0.7 0.1,1.5 -0.5,2 l-1.9,1.5 c1.4,3 3.6,5.2 6.6,6.6 l1.5,-1.9 c0.5,-0.6 1.3,-0.8 2,-0.5 l4,1.6 c0.8,0.3 1.2,1 1,1.8 l-0.8,3.2 c-0.2,0.9 -1,1.5 -1.9,1.5 c-10,-0.5 -17.5,-8 -18,-18 c0,-0.9 0.6,-1.7 1.5,-2 z" fill="none" stroke="#253f8f" stroke-width="1.9" stroke-linejoin="round"/>
<path d="M1863,233.2 a10.3,10.3 0 1 0 9.5,0" fill="none" stroke="#8b1c1c" stroke-width="2.1" stroke-linecap="round"/>
<line x1="1867.7" y1="229.3" x2="1867.7" y2="240.8" stroke="#8b1c1c" stroke-width="2.1" stroke-linecap="round"/>
<text x="1588.6" y="317" font-size="18" fill="#1a1a1a" font-weight="normal" text-anchor="start" textLength="70" lengthAdjust="spacingAndGlyphs" >Analysis</text>
<text x="1702" y="317" font-size="18" fill="#5e7191" font-weight="normal" text-anchor="start" textLength="89.7" lengthAdjust="spacingAndGlyphs" >Assurance</text>
<rect x="1577.4" y="331.3" width="332" height="2" fill="#e3e8f0" stroke="none" stroke-width="1" rx="0" />
<rect x="1577.4" y="330.7" width="92.4" height="3" fill="#253f8f" stroke="none" stroke-width="1" rx="0" />
<rect x="1578" y="350" width="330.8" height="311.3" fill="#ffffff" stroke="#dde3ec" stroke-width="1.2" rx="6" />
<text x="1600.3" y="388.7" font-size="20.5" fill="#141414" font-weight="bold" text-anchor="start" textLength="131.7" lengthAdjust="spacingAndGlyphs" >Create module</text>
<text x="1600.3" y="415" font-size="16" fill="#5e7191" font-weight="normal" text-anchor="start" textLength="263.5" lengthAdjust="spacingAndGlyphs" >Select a category, module, and item</text>
<text x="1600.2" y="464.8" font-size="16" fill="#1a1a1a" font-weight="normal" text-anchor="start" textLength="68" lengthAdjust="spacingAndGlyphs" stroke="#1a1a1a" stroke-width="0.28">Category</text>
<rect x="1681.6" y="441.5" width="205.1" height="35.4" fill="#ffffff" stroke="#d8dee8" stroke-width="1.1" rx="2" />
<text x="1698.4" y="464.8" font-size="16" fill="#1a1a1a" font-weight="normal" text-anchor="start" textLength="115" lengthAdjust="spacingAndGlyphs" >Impact Analysis</text>
<path d="M1853.8,456.0 l6.2,6 l6.2,-6" fill="none" stroke="#555" stroke-width="1.4" stroke-linecap="round" stroke-linejoin="round"/>
<text x="1600.2" y="516.8" font-size="16" fill="#1a1a1a" font-weight="normal" text-anchor="start" textLength="57" lengthAdjust="spacingAndGlyphs" stroke="#1a1a1a" stroke-width="0.28">Module</text>
<rect x="1681.6" y="493.5" width="205.1" height="35.4" fill="#ffffff" stroke="#d8dee8" stroke-width="1.1" rx="2" />
<text x="1698.4" y="516.8" font-size="16" fill="#1a1a1a" font-weight="normal" text-anchor="start" textLength="141.5" lengthAdjust="spacingAndGlyphs" >Sensitivity Analysis</text>
<path d="M1853.8,508.0 l6.2,6 l6.2,-6" fill="none" stroke="#555" stroke-width="1.4" stroke-linecap="round" stroke-linejoin="round"/>
<text x="1600.2" y="569.0999999999999" font-size="16" fill="#1a1a1a" font-weight="normal" text-anchor="start" textLength="33" lengthAdjust="spacingAndGlyphs" stroke="#1a1a1a" stroke-width="0.28">Item</text>
<rect x="1681.6" y="545.8" width="205.1" height="35.4" fill="#ffffff" stroke="#d8dee8" stroke-width="1.1" rx="2" />
<text x="1698.4" y="569.0999999999999" font-size="16" fill="#1a1a1a" font-weight="normal" text-anchor="start" textLength="59.4" lengthAdjust="spacingAndGlyphs" >6 Inputs</text>
<path d="M1853.8,560.3 l6.2,6 l6.2,-6" fill="none" stroke="#555" stroke-width="1.4" stroke-linecap="round" stroke-linejoin="round"/>
<rect x="1678.8" y="603.3" width="82.7" height="36" fill="#ffffff" stroke="#dde3ec" stroke-width="1.2" rx="4" />
<text x="1699" y="627" font-size="16" fill="#1a1a1a" font-weight="normal" text-anchor="start" textLength="41.7" lengthAdjust="spacingAndGlyphs" stroke="#1a1a1a" stroke-width="0.5">Reset</text>
<rect x="1783" y="603" width="104" height="36.4" fill="#263f8c" stroke="none" stroke-width="1" rx="4" />
<text x="1809.7" y="627" font-size="16" fill="#ffffff" font-weight="normal" text-anchor="start" textLength="50.1" lengthAdjust="spacingAndGlyphs" stroke="#ffffff" stroke-width="0.5">Create</text>
<rect x="1578" y="675.5" width="330.8" height="193.5" fill="#ffffff" stroke="#dde3ec" stroke-width="1.2" rx="6" />
<text x="1600" y="714" font-size="20.5" fill="#141414" font-weight="bold" text-anchor="start" textLength="141.7" lengthAdjust="spacingAndGlyphs" >Evaluate results</text>
<text x="1600" y="740.5" font-size="16" fill="#5e7191" font-weight="normal" text-anchor="start" textLength="192.3" lengthAdjust="spacingAndGlyphs" >Evaluate a Fontics module</text>
<text x="1600" y="782.6" font-size="16" fill="#1a1a1a" font-weight="normal" text-anchor="start" textLength="52.3" lengthAdjust="spacingAndGlyphs" stroke="#1a1a1a" stroke-width="0.5">Status:</text>
<text x="1662" y="782.6" font-size="16" fill="#5e7191" font-weight="normal" text-anchor="start" textLength="137.5" lengthAdjust="spacingAndGlyphs" >Completed in 4.2s.</text>
<rect x="1678.6" y="811.5" width="82.8" height="35.5" fill="#ffffff" stroke="#dde3ec" stroke-width="1.2" rx="4" />
<text x="1699" y="835" font-size="16" fill="#1a1a1a" font-weight="normal" text-anchor="start" textLength="41.7" lengthAdjust="spacingAndGlyphs" stroke="#1a1a1a" stroke-width="0.5">Reset</text>
<rect x="1783" y="811.3" width="104.3" height="35.7" fill="#263f8c" stroke="none" stroke-width="1" rx="4" />
<text x="1802.5" y="835" font-size="16" fill="#ffffff" font-weight="normal" text-anchor="start" textLength="65" lengthAdjust="spacingAndGlyphs" stroke="#ffffff" stroke-width="0.5">Evaluate</text>
<line x1="1566" y1="911.5" x2="1920" y2="911.5" stroke="#bdbdbd" stroke-width="2" />
<rect x="0" y="878" width="1566" height="33" fill="#f0f0f0" stroke="none" stroke-width="1" rx="0" />
<line x1="0" y1="878.5" x2="1566" y2="878.5" stroke="#d6d6d6" stroke-width="1" />
<line x1="0" y1="911.5" x2="1566" y2="911.5" stroke="#b9b9b9" stroke-width="2" />
<path d="M26.7,888.5 L17.2,895.2 L26.7,902 z" fill="#555" stroke="none" stroke-width="1" />
<path d="M46.4,888.5 L56,895.2 L46.4,902 z" fill="#555" stroke="none" stroke-width="1" />
<line x1="76.5" y1="881" x2="76.5" y2="904" stroke="#d0d0d0" stroke-width="1.2" />
<line x1="179.2" y1="881" x2="179.2" y2="904" stroke="#d0d0d0" stroke-width="1.2" />
<line x1="667.5" y1="881" x2="667.5" y2="904" stroke="#d0d0d0" stroke-width="1.2" />
<line x1="831" y1="881" x2="831" y2="904" stroke="#d0d0d0" stroke-width="1.2" />
<line x1="997.5" y1="881" x2="997.5" y2="904" stroke="#d0d0d0" stroke-width="1.2" />
<line x1="1156" y1="881" x2="1156" y2="904" stroke="#d0d0d0" stroke-width="1.2" />
<line x1="1330" y1="881" x2="1330" y2="904" stroke="#d0d0d0" stroke-width="1.2" />
<line x1="1476" y1="881" x2="1476" y2="904" stroke="#d0d0d0" stroke-width="1.2" />
<line x1="1526" y1="881" x2="1526" y2="904" stroke="#d0d0d0" stroke-width="1.2" />
<path d="M340,878 V906 a4,4 0 0 0 4,4 H510 a4,4 0 0 0 4,-4 V878 z" fill="#ffffff" stroke="#cfcfcf" stroke-width="1" />
<rect x="340.6" y="877" width="172.8" height="3" fill="#ffffff" stroke="none" stroke-width="1" rx="0" />
<text x="112.5" y="900.4" font-size="16" fill="#7d7d7d" font-weight="normal" text-anchor="start" textLength="31.5" lengthAdjust="spacingAndGlyphs" >DCF</text>
<text x="203.3" y="900.4" font-size="16" fill="#424242" font-weight="normal" text-anchor="start" textLength="111.09999999999997" lengthAdjust="spacingAndGlyphs" >f_Scenario_F5e</text>
<text x="363.6" y="900.4" font-size="16" fill="#1e7a45" font-weight="bold" text-anchor="start" textLength="126.29999999999995" lengthAdjust="spacingAndGlyphs" >f_Sensitivity_C1x</text>
<text x="538.5" y="900.4" font-size="16" fill="#424242" font-weight="normal" text-anchor="start" textLength="105.0" lengthAdjust="spacingAndGlyphs" >f_What If_C1m</text>
<text x="691.5" y="900.4" font-size="16" fill="#424242" font-weight="normal" text-anchor="start" textLength="114.5" lengthAdjust="spacingAndGlyphs" >f_Optimize_U0q</text>
<text x="855" y="900.4" font-size="16" fill="#424242" font-weight="normal" text-anchor="start" textLength="117" lengthAdjust="spacingAndGlyphs" >f_Optimize_K5m</text>
<text x="1021" y="900.4" font-size="16" fill="#424242" font-weight="normal" text-anchor="start" textLength="110" lengthAdjust="spacingAndGlyphs" >f_Optimize_K2t</text>
<text x="1180" y="900.4" font-size="16" fill="#424242" font-weight="normal" text-anchor="start" textLength="125" lengthAdjust="spacingAndGlyphs" >f_Data Table_K1y</text>
<text x="1354" y="900.4" font-size="16" fill="#424242" font-weight="normal" text-anchor="start" textLength="112" lengthAdjust="spacingAndGlyphs" >f_Treemap_M4z</text>
<defs><linearGradient id="fade" x1="0" x2="1"><stop offset="0" stop-color="#f0f0f0" stop-opacity="0"/><stop offset="1" stop-color="#f0f0f0" stop-opacity="0.85"/></linearGradient></defs>
<rect x="1430" y="884" width="45" height="22" fill="url(#fade)" stroke="none" stroke-width="1" rx="0" />
<path d="M1501.5,887.5 V902.5 M1494,895 H1509" fill="none" stroke="#3a3a3a" stroke-width="2" />
</svg>
</body></html>
